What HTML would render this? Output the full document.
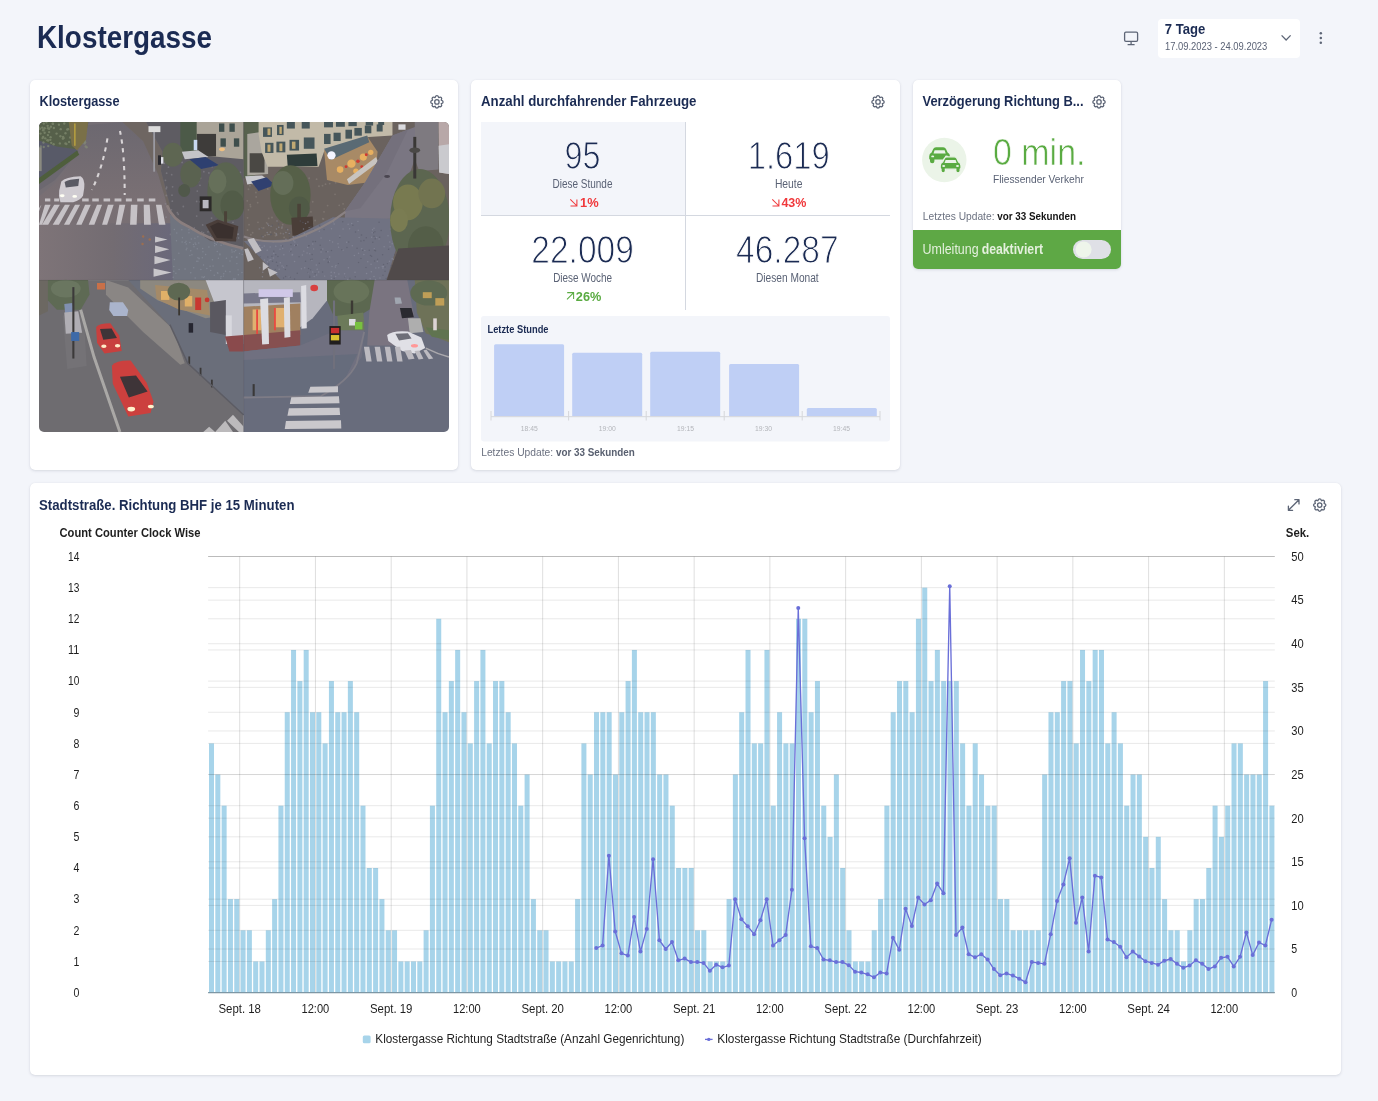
<!DOCTYPE html>
<html><head><meta charset="utf-8"><title>Klostergasse</title>
<style>
html,body{margin:0;padding:0;background:#f3f5fa;width:1378px;height:1101px;overflow:hidden;}
body{position:relative;font-family:"Liberation Sans",sans-serif;}
.card{position:absolute;background:#fff;border-radius:5px;box-shadow:0 1px 3px rgba(30,40,70,0.13),0 0 1px rgba(30,40,70,0.08);}
svg.ov{position:absolute;left:0;top:0;will-change:transform;}
svg text{font-family:"Liberation Sans",sans-serif;}
.light{stroke:#fff;stroke-width:0;}
</style></head><body>
<div style="position:absolute;left:1158px;top:19px;width:142px;height:39px;background:#fff;border-radius:4px"></div>
<div class="card" style="left:30px;top:80px;width:428px;height:390px"></div>
<div class="card" style="left:471px;top:80px;width:429px;height:390px"></div>
<div class="card" style="left:913px;top:80px;width:208px;height:189px"></div>
<div class="card" style="left:30px;top:483px;width:1311px;height:592px"></div>
<svg class="ov" width="1378" height="1101" viewBox="0 0 1378 1101">
<defs><clipPath id="pc"><rect x="39" y="122" width="410" height="310" rx="5"/></clipPath></defs>
<g clip-path="url(#pc)">
<g transform="translate(39,122) scale(0.29753)"><defs><linearGradient id="tlr" x1="0" y1="0" x2="1" y2="0"><stop offset="0" stop-color="#7e7478"/><stop offset="0.55" stop-color="#736c72"/><stop offset="1" stop-color="#6a687a"/></linearGradient><linearGradient id="tlu" x1="0" y1="0" x2="0" y2="1"><stop offset="0" stop-color="#6c6870"/><stop offset="0.5" stop-color="#7a7074"/><stop offset="1" stop-color="#736c72"/></linearGradient></defs>
<rect x="0" y="0" width="688" height="532" fill="#746e74"/>
<polygon points="164,10 280,0 350,65 400,175 440,310 450,532 0,532 0,250 54,205 126,109" fill="url(#tlu)"/>
<polygon points="0,340 450,340 450,532 0,532" fill="url(#tlr)"/>
<polygon points="0,0 170,0 164,10 126,109 54,195 0,230" fill="#6c6870"/>
<polygon points="0,60 60,80 125,92 132,100 0,190" fill="#585a68"/>
<polygon points="0,0 165,0 155,55 125,92 60,82 0,62" fill="#56604a"/>
<g fill="#8a9478" opacity="0.6"><circle cx="72" cy="48" r="4"/><circle cx="148" cy="40" r="4"/><circle cx="81" cy="50" r="4"/><circle cx="30" cy="44" r="4"/><circle cx="101" cy="67" r="4"/><circle cx="15" cy="26" r="4"/><circle cx="15" cy="69" r="4"/><circle cx="111" cy="4" r="4"/><circle cx="157" cy="82" r="4"/><circle cx="105" cy="52" r="4"/><circle cx="25" cy="1" r="4"/><circle cx="85" cy="5" r="4"/><circle cx="30" cy="21" r="4"/><circle cx="5" cy="39" r="4"/><circle cx="70" cy="72" r="4"/><circle cx="83" cy="54" r="4"/><circle cx="80" cy="56" r="4"/><circle cx="73" cy="24" r="4"/><circle cx="160" cy="85" r="4"/><circle cx="134" cy="60" r="4"/><circle cx="50" cy="20" r="4"/><circle cx="46" cy="6" r="4"/><circle cx="123" cy="34" r="4"/><circle cx="135" cy="33" r="4"/><circle cx="153" cy="72" r="4"/><circle cx="0" cy="18" r="4"/><circle cx="146" cy="40" r="4"/><circle cx="157" cy="34" r="4"/><circle cx="12" cy="54" r="4"/><circle cx="125" cy="23" r="4"/><circle cx="14" cy="28" r="4"/><circle cx="154" cy="64" r="4"/><circle cx="19" cy="21" r="4"/><circle cx="16" cy="5" r="4"/><circle cx="128" cy="15" r="4"/><circle cx="89" cy="38" r="4"/><circle cx="31" cy="62" r="4"/><circle cx="21" cy="55" r="4"/><circle cx="19" cy="36" r="4"/><circle cx="34" cy="23" r="4"/><circle cx="155" cy="68" r="4"/><circle cx="49" cy="75" r="4"/><circle cx="34" cy="34" r="4"/><circle cx="137" cy="55" r="4"/><circle cx="16" cy="84" r="4"/><circle cx="34" cy="22" r="4"/><circle cx="124" cy="28" r="4"/><circle cx="47" cy="6" r="4"/><circle cx="14" cy="50" r="4"/><circle cx="39" cy="51" r="4"/><circle cx="59" cy="39" r="4"/><circle cx="153" cy="41" r="4"/><circle cx="92" cy="74" r="4"/><circle cx="29" cy="13" r="4"/><circle cx="145" cy="70" r="4"/><circle cx="40" cy="16" r="4"/><circle cx="118" cy="80" r="4"/><circle cx="31" cy="81" r="4"/><circle cx="141" cy="51" r="4"/><circle cx="67" cy="9" r="4"/><circle cx="6" cy="82" r="4"/><circle cx="38" cy="60" r="4"/><circle cx="41" cy="70" r="4"/><circle cx="95" cy="25" r="4"/><circle cx="28" cy="61" r="4"/><circle cx="11" cy="19" r="4"/><circle cx="89" cy="72" r="4"/><circle cx="98" cy="24" r="4"/><circle cx="147" cy="17" r="4"/><circle cx="3" cy="23" r="4"/></g>
<polygon points="100,0 165,0 158,60 128,95 110,80" fill="#7a7048"/>
<rect x="118" y="5" width="5" height="75" fill="#b8a040"/>
<polygon points="0,188 128,96 135,110 0,208" fill="#4e5e3c"/>
<rect x="0" y="85" width="9" height="80" fill="#8a8a80"/>
<polygon points="280,0 360,0 415,100 410,165 440,280 440,310 400,175 350,65" fill="#6e6662"/>
<polygon points="360,0 688,0 688,420 575,400 500,350 440,310 440,280 410,165 415,100" fill="#5e5c62"/>
<g fill="#8a8890" opacity="0.55"><circle cx="669" cy="376" r="3"/><circle cx="435" cy="152" r="3"/><circle cx="637" cy="321" r="3"/><circle cx="594" cy="210" r="3"/><circle cx="578" cy="288" r="3"/><circle cx="571" cy="171" r="3"/><circle cx="532" cy="232" r="3"/><circle cx="608" cy="389" r="3"/><circle cx="667" cy="271" r="3"/><circle cx="536" cy="200" r="3"/><circle cx="429" cy="137" r="3"/><circle cx="541" cy="213" r="3"/><circle cx="519" cy="362" r="3"/><circle cx="557" cy="276" r="3"/><circle cx="481" cy="136" r="3"/><circle cx="505" cy="166" r="3"/><circle cx="553" cy="390" r="3"/><circle cx="595" cy="177" r="3"/><circle cx="652" cy="337" r="3"/><circle cx="611" cy="366" r="3"/><circle cx="618" cy="335" r="3"/><circle cx="512" cy="385" r="3"/><circle cx="670" cy="172" r="3"/><circle cx="616" cy="316" r="3"/><circle cx="540" cy="268" r="3"/><circle cx="547" cy="370" r="3"/><circle cx="550" cy="346" r="3"/><circle cx="512" cy="360" r="3"/><circle cx="654" cy="250" r="3"/><circle cx="568" cy="369" r="3"/><circle cx="608" cy="257" r="3"/><circle cx="478" cy="214" r="3"/><circle cx="602" cy="173" r="3"/><circle cx="656" cy="200" r="3"/><circle cx="657" cy="210" r="3"/><circle cx="669" cy="314" r="3"/><circle cx="551" cy="265" r="3"/><circle cx="589" cy="283" r="3"/><circle cx="501" cy="184" r="3"/><circle cx="553" cy="373" r="3"/><circle cx="582" cy="150" r="3"/><circle cx="633" cy="319" r="3"/><circle cx="656" cy="180" r="3"/><circle cx="614" cy="145" r="3"/><circle cx="590" cy="201" r="3"/><circle cx="479" cy="358" r="3"/><circle cx="448" cy="266" r="3"/><circle cx="642" cy="194" r="3"/><circle cx="475" cy="359" r="3"/><circle cx="530" cy="316" r="3"/><circle cx="428" cy="224" r="3"/><circle cx="465" cy="305" r="3"/><circle cx="442" cy="378" r="3"/><circle cx="427" cy="320" r="3"/><circle cx="425" cy="196" r="3"/><circle cx="631" cy="171" r="3"/><circle cx="468" cy="310" r="3"/><circle cx="520" cy="141" r="3"/><circle cx="677" cy="169" r="3"/><circle cx="429" cy="219" r="3"/><circle cx="580" cy="323" r="3"/><circle cx="449" cy="218" r="3"/><circle cx="428" cy="247" r="3"/><circle cx="619" cy="322" r="3"/><circle cx="655" cy="326" r="3"/><circle cx="644" cy="313" r="3"/><circle cx="543" cy="189" r="3"/><circle cx="592" cy="212" r="3"/><circle cx="447" cy="246" r="3"/><circle cx="647" cy="163" r="3"/><circle cx="572" cy="232" r="3"/><circle cx="554" cy="167" r="3"/><circle cx="670" cy="197" r="3"/><circle cx="578" cy="239" r="3"/><circle cx="425" cy="275" r="3"/><circle cx="457" cy="145" r="3"/><circle cx="429" cy="172" r="3"/><circle cx="445" cy="295" r="3"/><circle cx="552" cy="386" r="3"/><circle cx="663" cy="389" r="3"/><circle cx="480" cy="246" r="3"/><circle cx="485" cy="284" r="3"/><circle cx="582" cy="338" r="3"/><circle cx="604" cy="197" r="3"/><circle cx="530" cy="267" r="3"/><circle cx="421" cy="139" r="3"/><circle cx="526" cy="159" r="3"/><circle cx="608" cy="193" r="3"/><circle cx="446" cy="177" r="3"/><circle cx="480" cy="187" r="3"/></g>
<polygon points="440,310 500,350 575,400 688,420 688,532 450,532" fill="#70747f"/>
<g fill="#9096a4" opacity="0.5"><circle cx="507" cy="449" r="2.5"/><circle cx="538" cy="460" r="2.5"/><circle cx="599" cy="362" r="2.5"/><circle cx="453" cy="502" r="2.5"/><circle cx="512" cy="393" r="2.5"/><circle cx="687" cy="436" r="2.5"/><circle cx="649" cy="437" r="2.5"/><circle cx="602" cy="377" r="2.5"/><circle cx="601" cy="508" r="2.5"/><circle cx="575" cy="485" r="2.5"/><circle cx="610" cy="362" r="2.5"/><circle cx="630" cy="458" r="2.5"/><circle cx="522" cy="356" r="2.5"/><circle cx="656" cy="436" r="2.5"/><circle cx="621" cy="510" r="2.5"/><circle cx="620" cy="518" r="2.5"/><circle cx="544" cy="496" r="2.5"/><circle cx="556" cy="520" r="2.5"/><circle cx="659" cy="368" r="2.5"/><circle cx="482" cy="389" r="2.5"/><circle cx="680" cy="429" r="2.5"/><circle cx="599" cy="405" r="2.5"/><circle cx="571" cy="420" r="2.5"/><circle cx="534" cy="456" r="2.5"/><circle cx="589" cy="515" r="2.5"/><circle cx="612" cy="519" r="2.5"/><circle cx="654" cy="530" r="2.5"/><circle cx="610" cy="380" r="2.5"/><circle cx="655" cy="526" r="2.5"/><circle cx="665" cy="454" r="2.5"/><circle cx="620" cy="388" r="2.5"/><circle cx="648" cy="454" r="2.5"/><circle cx="518" cy="362" r="2.5"/><circle cx="653" cy="530" r="2.5"/><circle cx="471" cy="496" r="2.5"/><circle cx="548" cy="377" r="2.5"/><circle cx="520" cy="490" r="2.5"/><circle cx="658" cy="358" r="2.5"/><circle cx="596" cy="358" r="2.5"/><circle cx="621" cy="410" r="2.5"/><circle cx="660" cy="528" r="2.5"/><circle cx="570" cy="532" r="2.5"/><circle cx="524" cy="364" r="2.5"/><circle cx="593" cy="356" r="2.5"/><circle cx="497" cy="424" r="2.5"/><circle cx="595" cy="378" r="2.5"/><circle cx="460" cy="508" r="2.5"/><circle cx="525" cy="524" r="2.5"/><circle cx="663" cy="419" r="2.5"/><circle cx="560" cy="445" r="2.5"/><circle cx="603" cy="458" r="2.5"/><circle cx="583" cy="463" r="2.5"/><circle cx="674" cy="442" r="2.5"/><circle cx="553" cy="481" r="2.5"/><circle cx="507" cy="405" r="2.5"/><circle cx="683" cy="445" r="2.5"/><circle cx="581" cy="352" r="2.5"/><circle cx="549" cy="456" r="2.5"/><circle cx="455" cy="462" r="2.5"/><circle cx="600" cy="361" r="2.5"/><circle cx="599" cy="435" r="2.5"/><circle cx="612" cy="414" r="2.5"/><circle cx="618" cy="484" r="2.5"/><circle cx="455" cy="361" r="2.5"/><circle cx="611" cy="525" r="2.5"/><circle cx="510" cy="433" r="2.5"/><circle cx="591" cy="408" r="2.5"/><circle cx="537" cy="407" r="2.5"/><circle cx="538" cy="458" r="2.5"/><circle cx="521" cy="419" r="2.5"/><circle cx="634" cy="355" r="2.5"/><circle cx="585" cy="484" r="2.5"/><circle cx="524" cy="391" r="2.5"/><circle cx="641" cy="393" r="2.5"/><circle cx="495" cy="429" r="2.5"/><circle cx="616" cy="369" r="2.5"/><circle cx="527" cy="411" r="2.5"/><circle cx="648" cy="430" r="2.5"/><circle cx="654" cy="381" r="2.5"/><circle cx="530" cy="468" r="2.5"/><circle cx="661" cy="432" r="2.5"/><circle cx="504" cy="372" r="2.5"/><circle cx="576" cy="385" r="2.5"/><circle cx="642" cy="503" r="2.5"/><circle cx="494" cy="401" r="2.5"/><circle cx="642" cy="467" r="2.5"/><circle cx="642" cy="413" r="2.5"/><circle cx="481" cy="403" r="2.5"/><circle cx="639" cy="399" r="2.5"/><circle cx="532" cy="426" r="2.5"/><circle cx="550" cy="425" r="2.5"/><circle cx="669" cy="378" r="2.5"/><circle cx="451" cy="522" r="2.5"/><circle cx="659" cy="530" r="2.5"/><circle cx="553" cy="523" r="2.5"/><circle cx="671" cy="390" r="2.5"/><circle cx="627" cy="502" r="2.5"/><circle cx="608" cy="444" r="2.5"/><circle cx="519" cy="412" r="2.5"/><circle cx="504" cy="362" r="2.5"/><circle cx="590" cy="402" r="2.5"/><circle cx="643" cy="358" r="2.5"/><circle cx="665" cy="476" r="2.5"/><circle cx="670" cy="513" r="2.5"/><circle cx="664" cy="455" r="2.5"/><circle cx="453" cy="486" r="2.5"/><circle cx="491" cy="405" r="2.5"/><circle cx="608" cy="446" r="2.5"/><circle cx="548" cy="521" r="2.5"/><circle cx="596" cy="412" r="2.5"/><circle cx="510" cy="507" r="2.5"/><circle cx="564" cy="492" r="2.5"/><circle cx="534" cy="386" r="2.5"/><circle cx="577" cy="499" r="2.5"/><circle cx="491" cy="494" r="2.5"/><circle cx="669" cy="497" r="2.5"/><circle cx="646" cy="351" r="2.5"/><circle cx="600" cy="507" r="2.5"/><circle cx="462" cy="399" r="2.5"/><circle cx="514" cy="446" r="2.5"/><circle cx="551" cy="436" r="2.5"/><circle cx="635" cy="350" r="2.5"/><circle cx="463" cy="373" r="2.5"/><circle cx="480" cy="362" r="2.5"/><circle cx="682" cy="506" r="2.5"/><circle cx="470" cy="441" r="2.5"/><circle cx="525" cy="407" r="2.5"/><circle cx="534" cy="468" r="2.5"/><circle cx="590" cy="416" r="2.5"/><circle cx="495" cy="410" r="2.5"/></g>
<path d="M430 280 Q450 330 500 350 Q575 400 688 425" fill="none" stroke="#8a7e7e" stroke-width="9"/>
<polygon points="525,0 688,0 688,125 525,110" fill="#aaa498"/>
<g fill="#3e4e4c"><rect x="605" y="5" width="18" height="28"/><rect x="640" y="5" width="18" height="28"/><rect x="610" y="55" width="18" height="28"/><rect x="655" y="55" width="18" height="28"/></g>
<rect x="530" y="40" width="65" height="75" fill="#3e3c3a"/>
<polygon points="475,0 530,0 530,100 475,100" fill="#4c5a48"/>
<rect x="520" y="60" width="12" height="35" fill="#c8d8f0"/>
<ellipse cx="615" cy="92" rx="10" ry="6" fill="#f0c080"/>
<ellipse cx="450" cy="110" rx="35" ry="40" fill="#5e6652"/>
<ellipse cx="510" cy="175" rx="35" ry="45" fill="#5a6250"/>
<ellipse cx="488" cy="230" rx="20" ry="22" fill="#50584a"/>
<polygon points="480,100 535,95 570,118 490,125" fill="#c4c4c8"/>
<polygon points="505,125 560,118 605,145 545,158" fill="#2e4070"/>
<ellipse cx="628" cy="235" rx="62" ry="100" fill="#5a6450"/>
<ellipse cx="600" cy="200" rx="30" ry="40" fill="#66705a"/>
<ellipse cx="650" cy="280" rx="40" ry="50" fill="#525c48"/>
<rect x="622" y="300" width="10" height="60" fill="#4a4238"/>
<polygon points="560,345 600,328 670,350 662,402 592,400" fill="#4a3e3a"/>
<polygon points="575,350 602,338 655,355 650,392 598,390" fill="#3a302e"/>
<rect x="540" y="250" width="40" height="50" fill="#2c2a2a"/>
<rect x="550" y="262" width="20" height="28" fill="#b8b8c0"/>
<rect x="384" y="32" width="6" height="135" fill="#9a9aa2"/>
<rect x="368" y="14" width="40" height="20" fill="#dcdcdc"/>
<rect x="400" y="112" width="10" height="32" fill="#2a2a30"/>
<rect x="410" y="118" width="8" height="22" fill="#e0e0e8"/>
<path d="M75 200 Q88 184 140 182 Q155 190 152 222 L148 248 Q140 262 115 270 L72 270 Q64 250 68 230 Z" fill="#d0ccd2"/>
<path d="M86 202 Q100 193 135 191 L132 215 L90 220 Z" fill="#5a5a64"/>
<ellipse cx="78" cy="248" rx="8" ry="5" fill="#fffff4"/>
<ellipse cx="120" cy="250" rx="8" ry="5" fill="#fffff4"/>
<path d="M230 55 Q215 150 178 228" fill="none" stroke="#d8d4d6" stroke-width="7" stroke-dasharray="14 16"/>
<path d="M272 30 Q288 100 288 245" fill="none" stroke="#d8d4d6" stroke-width="7" stroke-dasharray="14 16"/>
<g fill="#c4c0c4"><rect x="20" y="257" width="18" height="10"/><rect x="51" y="257" width="17" height="10"/><rect x="145" y="257" width="22" height="10"/><rect x="179" y="257" width="22" height="10"/><rect x="217" y="257" width="22" height="10"/><rect x="254" y="257" width="23" height="10"/><rect x="292" y="257" width="20" height="10"/><rect x="330" y="257" width="22" height="10"/><rect x="369" y="257" width="22" height="10"/></g>
<g fill="#c6c2c6"><polygon points="20,278 39,278 10,345 0,345"/><polygon points="51,278 70,278 31,345 10,345"/><polygon points="87,278 104,278 67,345 46,345"/><polygon points="121,278 138,278 102,345 84,345"/><polygon points="155,278 174,278 143,345 125,345"/><polygon points="195,278 212,278 186,345 167,345"/><polygon points="232,278 251,278 229,345 212,345"/><polygon points="270,278 290,278 275,345 258,345"/><polygon points="309,278 331,278 328,345 306,345"/><polygon points="352,278 372,278 376,345 353,345"/><polygon points="393,278 412,278 425,345 403,345"/><polygon points="0,290 8,278 0,300"/></g>
<g fill="#c8c6ca"><polygon points="390,385 432,395 390,405"/><polygon points="390,415 438,428 390,440"/><polygon points="388,450 442,464 388,478"/><polygon points="385,492 446,506 385,520"/></g>
<g fill="#b07040" opacity="0.7"><circle cx="350" cy="385" r="4"/><circle cx="372" cy="395" r="4"/><circle cx="348" cy="410" r="4"/></g>
<rect x="688" y="0" width="690" height="532" fill="#6a625e"/>
<g fill="#8e8680" opacity="0.5"><circle cx="906" cy="336" r="3"/><circle cx="962" cy="378" r="3"/><circle cx="944" cy="374" r="3"/><circle cx="710" cy="278" r="3"/><circle cx="1011" cy="316" r="3"/><circle cx="997" cy="204" r="3"/><circle cx="855" cy="232" r="3"/><circle cx="879" cy="301" r="3"/><circle cx="704" cy="226" r="3"/><circle cx="792" cy="372" r="3"/><circle cx="953" cy="214" r="3"/><circle cx="963" cy="209" r="3"/><circle cx="904" cy="207" r="3"/><circle cx="701" cy="363" r="3"/><circle cx="769" cy="225" r="3"/><circle cx="1024" cy="363" r="3"/><circle cx="795" cy="382" r="3"/><circle cx="878" cy="322" r="3"/><circle cx="768" cy="378" r="3"/><circle cx="928" cy="383" r="3"/><circle cx="995" cy="243" r="3"/><circle cx="819" cy="215" r="3"/><circle cx="748" cy="194" r="3"/><circle cx="799" cy="307" r="3"/><circle cx="701" cy="322" r="3"/><circle cx="812" cy="245" r="3"/><circle cx="970" cy="281" r="3"/><circle cx="804" cy="281" r="3"/><circle cx="933" cy="192" r="3"/><circle cx="1022" cy="185" r="3"/><circle cx="947" cy="357" r="3"/><circle cx="706" cy="345" r="3"/><circle cx="821" cy="301" r="3"/><circle cx="703" cy="190" r="3"/><circle cx="760" cy="381" r="3"/><circle cx="765" cy="339" r="3"/><circle cx="1007" cy="378" r="3"/><circle cx="814" cy="255" r="3"/><circle cx="873" cy="343" r="3"/><circle cx="736" cy="337" r="3"/><circle cx="963" cy="361" r="3"/><circle cx="712" cy="379" r="3"/><circle cx="730" cy="252" r="3"/><circle cx="902" cy="373" r="3"/><circle cx="812" cy="374" r="3"/><circle cx="880" cy="246" r="3"/><circle cx="805" cy="217" r="3"/><circle cx="726" cy="211" r="3"/><circle cx="927" cy="389" r="3"/><circle cx="753" cy="190" r="3"/><circle cx="1026" cy="292" r="3"/><circle cx="834" cy="230" r="3"/><circle cx="896" cy="354" r="3"/><circle cx="850" cy="269" r="3"/><circle cx="718" cy="372" r="3"/><circle cx="711" cy="284" r="3"/><circle cx="977" cy="207" r="3"/><circle cx="941" cy="379" r="3"/><circle cx="908" cy="345" r="3"/><circle cx="735" cy="271" r="3"/><circle cx="749" cy="357" r="3"/><circle cx="797" cy="275" r="3"/><circle cx="1030" cy="359" r="3"/><circle cx="1022" cy="275" r="3"/><circle cx="861" cy="333" r="3"/><circle cx="858" cy="241" r="3"/><circle cx="833" cy="211" r="3"/><circle cx="824" cy="388" r="3"/><circle cx="1017" cy="312" r="3"/><circle cx="865" cy="251" r="3"/><circle cx="729" cy="237" r="3"/><circle cx="958" cy="362" r="3"/><circle cx="819" cy="345" r="3"/><circle cx="956" cy="326" r="3"/><circle cx="919" cy="340" r="3"/><circle cx="820" cy="328" r="3"/><circle cx="793" cy="282" r="3"/><circle cx="954" cy="325" r="3"/><circle cx="797" cy="379" r="3"/><circle cx="914" cy="302" r="3"/><circle cx="704" cy="295" r="3"/><circle cx="783" cy="321" r="3"/><circle cx="853" cy="352" r="3"/><circle cx="914" cy="348" r="3"/><circle cx="815" cy="315" r="3"/><circle cx="943" cy="354" r="3"/><circle cx="816" cy="357" r="3"/><circle cx="987" cy="325" r="3"/><circle cx="1022" cy="381" r="3"/><circle cx="871" cy="291" r="3"/><circle cx="755" cy="356" r="3"/><circle cx="1009" cy="280" r="3"/><circle cx="928" cy="331" r="3"/><circle cx="941" cy="216" r="3"/><circle cx="958" cy="302" r="3"/><circle cx="920" cy="268" r="3"/><circle cx="906" cy="343" r="3"/><circle cx="910" cy="331" r="3"/><circle cx="709" cy="214" r="3"/><circle cx="846" cy="317" r="3"/><circle cx="772" cy="324" r="3"/><circle cx="908" cy="189" r="3"/><circle cx="856" cy="228" r="3"/><circle cx="718" cy="208" r="3"/><circle cx="805" cy="218" r="3"/><circle cx="764" cy="187" r="3"/><circle cx="854" cy="260" r="3"/><circle cx="902" cy="304" r="3"/><circle cx="778" cy="370" r="3"/><circle cx="700" cy="265" r="3"/></g>
<polygon points="688,0 740,0 740,175 688,190" fill="#58624e"/>
<polygon points="700,40 770,30 770,175 700,180" fill="#aaa69e"/>
<rect x="708" y="105" width="50" height="65" fill="#4a4844"/>
<polygon points="738,0 1188,0 1188,45 1108,50 958,100 940,150 768,150 748,100 738,40" fill="#c2baa8"/>
<g fill="#46565a"><rect x="753" y="18" width="30" height="32"/><rect x="800" y="10" width="22" height="34"/><rect x="833" y="0" width="27" height="22"/><rect x="883" y="0" width="27" height="22"/><rect x="958" y="0" width="30" height="18"/><rect x="998" y="0" width="30" height="16"/><rect x="1040" y="0" width="28" height="14"/><rect x="1098" y="0" width="25" height="12"/><rect x="1140" y="0" width="20" height="10"/><rect x="760" y="70" width="28" height="34"/><rect x="798" y="66" width="30" height="36"/><rect x="842" y="60" width="32" height="36"/><rect x="890" y="52" width="36" height="38"/><rect x="958" y="40" width="22" height="34"/><rect x="990" y="36" width="24" height="28"/><rect x="1030" y="26" width="22" height="30"/><rect x="1060" y="20" width="25" height="26"/><rect x="1095" y="12" width="22" height="26"/><rect x="1135" y="8" width="20" height="24"/></g>
<g fill="#d8b878" opacity="0.85"><rect x="768" y="22" width="10" height="22"/><rect x="808" y="16" width="8" height="24"/><rect x="768" y="76" width="10" height="24"/><rect x="808" y="72" width="10" height="26"/><rect x="850" y="66" width="12" height="24"/></g>
<polygon points="833,110 933,106 936,148 836,150" fill="#2e3c3a"/>
<polygon points="958,95 1103,48 1138,100 1128,200 1038,212 968,195" fill="#a88a66"/>
<g fill="#e8b060"><circle cx="1050" cy="140" r="14"/><circle cx="1090" cy="118" r="12"/><circle cx="1012" cy="160" r="11"/><circle cx="1115" cy="102" r="9"/><circle cx="1065" cy="165" r="9"/></g>
<g fill="#d03a30"><circle cx="1072" cy="132" r="6"/><circle cx="1100" cy="110" r="5"/><circle cx="1032" cy="150" r="5"/><circle cx="1085" cy="150" r="5"/></g>
<polygon points="958,90 1103,45 1110,68 980,128" fill="#5a6a74"/>
<ellipse cx="983" cy="112" rx="14" ry="14" fill="#f4f4ff"/>
<polygon points="1035,192 1133,118 1140,135 1042,208" fill="#c8c4c0"/>
<polygon points="693,182 750,180 775,198 700,210" fill="#c8c8cc"/>
<polygon points="713,200 765,186 792,212 738,232" fill="#304070"/>
<ellipse cx="845" cy="245" rx="68" ry="100" fill="#566048"/>
<ellipse cx="820" cy="205" rx="35" ry="40" fill="#646e58"/>
<ellipse cx="875" cy="290" rx="35" ry="40" fill="#505a46"/>
<rect x="868" y="275" width="12" height="70" fill="#4a4238"/>
<polygon points="848,322 920,318 923,378 852,382" fill="#4a3e38"/>
<polygon points="1188,45 1308,0 1263,125 1193,325 1028,330 1028,300 1098,200" fill="#7a7682"/>
<polygon points="1188,45 1240,25 1170,170 1080,290 1028,300 1098,200" fill="#74707c"/>
<ellipse cx="1170" cy="183" rx="10" ry="5" fill="#4a4650"/>
<rect x="1208" y="8" width="24" height="18" fill="#dadade"/>
<rect x="1282" y="6" width="22" height="26" fill="#e4e4e8"/>
<polygon points="1263,0 1343,0 1343,160 1278,165 1263,125" fill="#7e7a80"/>
<polygon points="688,400 838,395 988,320 1193,325 1208,400 1168,532 813,532 738,450" fill="#707282"/>
<g fill="#8e90a0" opacity="0.6"><circle cx="889" cy="360" r="2.5"/><circle cx="1039" cy="344" r="2.5"/><circle cx="987" cy="403" r="2.5"/><circle cx="767" cy="431" r="2.5"/><circle cx="757" cy="417" r="2.5"/><circle cx="772" cy="348" r="2.5"/><circle cx="935" cy="495" r="2.5"/><circle cx="797" cy="375" r="2.5"/><circle cx="1029" cy="520" r="2.5"/><circle cx="1005" cy="409" r="2.5"/><circle cx="1189" cy="339" r="2.5"/><circle cx="1135" cy="388" r="2.5"/><circle cx="806" cy="354" r="2.5"/><circle cx="882" cy="493" r="2.5"/><circle cx="823" cy="446" r="2.5"/><circle cx="1034" cy="404" r="2.5"/><circle cx="992" cy="343" r="2.5"/><circle cx="767" cy="371" r="2.5"/><circle cx="1053" cy="416" r="2.5"/><circle cx="885" cy="447" r="2.5"/><circle cx="948" cy="390" r="2.5"/><circle cx="1105" cy="470" r="2.5"/><circle cx="852" cy="445" r="2.5"/><circle cx="982" cy="505" r="2.5"/><circle cx="1076" cy="388" r="2.5"/><circle cx="1191" cy="354" r="2.5"/><circle cx="932" cy="481" r="2.5"/><circle cx="810" cy="428" r="2.5"/><circle cx="758" cy="464" r="2.5"/><circle cx="1092" cy="445" r="2.5"/><circle cx="1143" cy="393" r="2.5"/><circle cx="1060" cy="449" r="2.5"/><circle cx="1007" cy="421" r="2.5"/><circle cx="1126" cy="519" r="2.5"/><circle cx="958" cy="463" r="2.5"/><circle cx="768" cy="470" r="2.5"/><circle cx="1038" cy="529" r="2.5"/><circle cx="1118" cy="387" r="2.5"/><circle cx="917" cy="464" r="2.5"/><circle cx="750" cy="422" r="2.5"/><circle cx="817" cy="353" r="2.5"/><circle cx="767" cy="484" r="2.5"/><circle cx="799" cy="380" r="2.5"/><circle cx="920" cy="504" r="2.5"/><circle cx="777" cy="420" r="2.5"/><circle cx="993" cy="507" r="2.5"/><circle cx="1117" cy="503" r="2.5"/><circle cx="868" cy="413" r="2.5"/><circle cx="905" cy="507" r="2.5"/><circle cx="1181" cy="360" r="2.5"/><circle cx="821" cy="376" r="2.5"/><circle cx="847" cy="427" r="2.5"/><circle cx="1011" cy="383" r="2.5"/><circle cx="742" cy="414" r="2.5"/><circle cx="910" cy="443" r="2.5"/><circle cx="1178" cy="468" r="2.5"/><circle cx="977" cy="454" r="2.5"/><circle cx="1051" cy="341" r="2.5"/><circle cx="1154" cy="486" r="2.5"/><circle cx="1142" cy="490" r="2.5"/><circle cx="920" cy="410" r="2.5"/><circle cx="788" cy="457" r="2.5"/><circle cx="769" cy="343" r="2.5"/><circle cx="836" cy="362" r="2.5"/><circle cx="896" cy="341" r="2.5"/><circle cx="740" cy="360" r="2.5"/><circle cx="787" cy="403" r="2.5"/><circle cx="752" cy="505" r="2.5"/><circle cx="1022" cy="360" r="2.5"/><circle cx="856" cy="399" r="2.5"/><circle cx="908" cy="355" r="2.5"/><circle cx="1131" cy="529" r="2.5"/><circle cx="954" cy="427" r="2.5"/><circle cx="780" cy="350" r="2.5"/><circle cx="898" cy="383" r="2.5"/><circle cx="1121" cy="362" r="2.5"/><circle cx="751" cy="520" r="2.5"/><circle cx="983" cy="359" r="2.5"/><circle cx="990" cy="335" r="2.5"/><circle cx="983" cy="526" r="2.5"/><circle cx="1137" cy="469" r="2.5"/><circle cx="860" cy="403" r="2.5"/><circle cx="817" cy="484" r="2.5"/><circle cx="985" cy="486" r="2.5"/><circle cx="892" cy="375" r="2.5"/><circle cx="1113" cy="527" r="2.5"/><circle cx="1132" cy="491" r="2.5"/><circle cx="1116" cy="478" r="2.5"/><circle cx="844" cy="434" r="2.5"/><circle cx="904" cy="336" r="2.5"/><circle cx="753" cy="386" r="2.5"/><circle cx="859" cy="469" r="2.5"/><circle cx="1180" cy="419" r="2.5"/><circle cx="1171" cy="528" r="2.5"/><circle cx="1179" cy="403" r="2.5"/><circle cx="841" cy="375" r="2.5"/><circle cx="830" cy="371" r="2.5"/><circle cx="1027" cy="510" r="2.5"/><circle cx="1127" cy="426" r="2.5"/><circle cx="1040" cy="490" r="2.5"/><circle cx="779" cy="462" r="2.5"/><circle cx="1158" cy="486" r="2.5"/><circle cx="1085" cy="426" r="2.5"/><circle cx="822" cy="488" r="2.5"/><circle cx="893" cy="490" r="2.5"/><circle cx="1187" cy="409" r="2.5"/><circle cx="925" cy="519" r="2.5"/><circle cx="1073" cy="364" r="2.5"/><circle cx="798" cy="360" r="2.5"/><circle cx="1156" cy="491" r="2.5"/><circle cx="807" cy="495" r="2.5"/><circle cx="1191" cy="461" r="2.5"/><circle cx="901" cy="440" r="2.5"/><circle cx="800" cy="333" r="2.5"/><circle cx="1187" cy="460" r="2.5"/><circle cx="982" cy="517" r="2.5"/><circle cx="940" cy="504" r="2.5"/><circle cx="1120" cy="372" r="2.5"/><circle cx="856" cy="389" r="2.5"/><circle cx="851" cy="447" r="2.5"/><circle cx="859" cy="414" r="2.5"/><circle cx="800" cy="512" r="2.5"/><circle cx="903" cy="422" r="2.5"/><circle cx="1008" cy="511" r="2.5"/><circle cx="933" cy="514" r="2.5"/><circle cx="971" cy="436" r="2.5"/><circle cx="981" cy="334" r="2.5"/><circle cx="942" cy="367" r="2.5"/><circle cx="742" cy="490" r="2.5"/><circle cx="819" cy="425" r="2.5"/><circle cx="1074" cy="441" r="2.5"/><circle cx="890" cy="434" r="2.5"/><circle cx="996" cy="487" r="2.5"/><circle cx="789" cy="442" r="2.5"/><circle cx="854" cy="385" r="2.5"/><circle cx="1095" cy="432" r="2.5"/><circle cx="998" cy="482" r="2.5"/><circle cx="1160" cy="419" r="2.5"/><circle cx="1022" cy="431" r="2.5"/><circle cx="976" cy="469" r="2.5"/><circle cx="948" cy="437" r="2.5"/><circle cx="960" cy="518" r="2.5"/><circle cx="1062" cy="505" r="2.5"/><circle cx="1173" cy="382" r="2.5"/><circle cx="997" cy="519" r="2.5"/><circle cx="1126" cy="357" r="2.5"/><circle cx="796" cy="418" r="2.5"/><circle cx="773" cy="378" r="2.5"/><circle cx="774" cy="464" r="2.5"/><circle cx="1101" cy="509" r="2.5"/><circle cx="811" cy="473" r="2.5"/><circle cx="1044" cy="359" r="2.5"/><circle cx="1146" cy="524" r="2.5"/><circle cx="841" cy="521" r="2.5"/><circle cx="923" cy="427" r="2.5"/><circle cx="1195" cy="496" r="2.5"/><circle cx="814" cy="416" r="2.5"/><circle cx="977" cy="398" r="2.5"/><circle cx="830" cy="394" r="2.5"/><circle cx="1072" cy="334" r="2.5"/></g>
<g fill="#585a68" opacity="0.6"><circle cx="844" cy="522" r="2.5"/><circle cx="798" cy="471" r="2.5"/><circle cx="779" cy="379" r="2.5"/><circle cx="1200" cy="372" r="2.5"/><circle cx="1035" cy="422" r="2.5"/><circle cx="948" cy="429" r="2.5"/><circle cx="828" cy="496" r="2.5"/><circle cx="781" cy="377" r="2.5"/><circle cx="749" cy="383" r="2.5"/><circle cx="928" cy="510" r="2.5"/><circle cx="914" cy="353" r="2.5"/><circle cx="859" cy="528" r="2.5"/><circle cx="769" cy="454" r="2.5"/><circle cx="914" cy="462" r="2.5"/><circle cx="896" cy="468" r="2.5"/><circle cx="969" cy="460" r="2.5"/><circle cx="1155" cy="446" r="2.5"/><circle cx="805" cy="343" r="2.5"/><circle cx="1175" cy="428" r="2.5"/><circle cx="829" cy="519" r="2.5"/><circle cx="1006" cy="476" r="2.5"/><circle cx="1145" cy="387" r="2.5"/><circle cx="904" cy="506" r="2.5"/><circle cx="802" cy="483" r="2.5"/><circle cx="785" cy="468" r="2.5"/><circle cx="1063" cy="520" r="2.5"/><circle cx="1128" cy="431" r="2.5"/><circle cx="831" cy="360" r="2.5"/><circle cx="983" cy="432" r="2.5"/><circle cx="773" cy="511" r="2.5"/><circle cx="973" cy="470" r="2.5"/><circle cx="841" cy="379" r="2.5"/><circle cx="745" cy="399" r="2.5"/><circle cx="863" cy="415" r="2.5"/><circle cx="913" cy="497" r="2.5"/><circle cx="1150" cy="365" r="2.5"/><circle cx="922" cy="363" r="2.5"/><circle cx="1045" cy="525" r="2.5"/><circle cx="833" cy="483" r="2.5"/><circle cx="878" cy="333" r="2.5"/><circle cx="1092" cy="398" r="2.5"/><circle cx="818" cy="417" r="2.5"/><circle cx="847" cy="412" r="2.5"/><circle cx="945" cy="414" r="2.5"/><circle cx="1011" cy="388" r="2.5"/><circle cx="784" cy="347" r="2.5"/><circle cx="789" cy="434" r="2.5"/><circle cx="906" cy="492" r="2.5"/><circle cx="972" cy="472" r="2.5"/><circle cx="1191" cy="343" r="2.5"/><circle cx="748" cy="358" r="2.5"/><circle cx="918" cy="445" r="2.5"/><circle cx="1082" cy="400" r="2.5"/><circle cx="1184" cy="331" r="2.5"/><circle cx="1124" cy="372" r="2.5"/><circle cx="1143" cy="337" r="2.5"/><circle cx="1184" cy="482" r="2.5"/><circle cx="1196" cy="446" r="2.5"/><circle cx="822" cy="524" r="2.5"/><circle cx="943" cy="347" r="2.5"/><circle cx="1018" cy="429" r="2.5"/><circle cx="958" cy="361" r="2.5"/><circle cx="796" cy="446" r="2.5"/><circle cx="948" cy="355" r="2.5"/><circle cx="942" cy="475" r="2.5"/><circle cx="1069" cy="424" r="2.5"/><circle cx="921" cy="402" r="2.5"/><circle cx="844" cy="370" r="2.5"/><circle cx="945" cy="352" r="2.5"/><circle cx="1074" cy="472" r="2.5"/><circle cx="1021" cy="335" r="2.5"/><circle cx="907" cy="416" r="2.5"/><circle cx="783" cy="524" r="2.5"/><circle cx="1088" cy="431" r="2.5"/><circle cx="1064" cy="370" r="2.5"/><circle cx="846" cy="435" r="2.5"/><circle cx="1082" cy="459" r="2.5"/><circle cx="743" cy="453" r="2.5"/><circle cx="1158" cy="479" r="2.5"/><circle cx="1167" cy="526" r="2.5"/><circle cx="843" cy="389" r="2.5"/><circle cx="992" cy="525" r="2.5"/><circle cx="910" cy="518" r="2.5"/><circle cx="1131" cy="433" r="2.5"/><circle cx="1028" cy="521" r="2.5"/><circle cx="1100" cy="389" r="2.5"/><circle cx="1129" cy="369" r="2.5"/><circle cx="910" cy="522" r="2.5"/><circle cx="1130" cy="392" r="2.5"/><circle cx="874" cy="453" r="2.5"/><circle cx="1128" cy="467" r="2.5"/><circle cx="1171" cy="476" r="2.5"/><circle cx="1118" cy="451" r="2.5"/><circle cx="907" cy="416" r="2.5"/><circle cx="965" cy="436" r="2.5"/><circle cx="1126" cy="384" r="2.5"/><circle cx="772" cy="477" r="2.5"/><circle cx="865" cy="414" r="2.5"/><circle cx="794" cy="496" r="2.5"/><circle cx="866" cy="388" r="2.5"/><circle cx="1110" cy="431" r="2.5"/><circle cx="868" cy="508" r="2.5"/><circle cx="929" cy="402" r="2.5"/><circle cx="1184" cy="488" r="2.5"/><circle cx="1084" cy="380" r="2.5"/><circle cx="1114" cy="449" r="2.5"/><circle cx="1122" cy="404" r="2.5"/><circle cx="1099" cy="489" r="2.5"/><circle cx="918" cy="461" r="2.5"/><circle cx="1099" cy="529" r="2.5"/><circle cx="1163" cy="487" r="2.5"/><circle cx="803" cy="452" r="2.5"/><circle cx="1055" cy="347" r="2.5"/><circle cx="953" cy="504" r="2.5"/><circle cx="1156" cy="515" r="2.5"/><circle cx="783" cy="451" r="2.5"/><circle cx="1138" cy="461" r="2.5"/><circle cx="887" cy="338" r="2.5"/><circle cx="1163" cy="502" r="2.5"/><circle cx="1041" cy="403" r="2.5"/></g>
<path d="M688 385 Q760 410 840 398 Q950 365 1030 302" fill="none" stroke="#8a8284" stroke-width="7"/>
<ellipse cx="1280" cy="330" rx="100" ry="172" fill="#5c6650"/>
<ellipse cx="1240" cy="270" rx="50" ry="60" fill="#787a50"/>
<ellipse cx="1320" cy="240" rx="45" ry="50" fill="#727450"/>
<ellipse cx="1300" cy="420" rx="60" ry="70" fill="#545e48"/>
<ellipse cx="1210" cy="330" rx="30" ry="40" fill="#7a7c52"/>
<rect x="1298" y="420" width="12" height="80" fill="#4a4030"/>
<polygon points="1208,425 1378,415 1378,532 1168,532" fill="#504a4a"/>
<polygon points="1343,0 1378,0 1378,175 1345,170" fill="#b8a8a8"/>
<polygon points="1343,80 1378,75 1378,175 1345,170" fill="#cacace"/>
<rect x="1258" y="50" width="10" height="140" fill="#3a3836"/>
<ellipse cx="1263" cy="95" rx="18" ry="9" fill="#4a4846"/>
<g fill="#c0bec2"><polygon points="700,395 722,390 748,432 728,442"/><polygon points="690,428 702,424 722,462 702,470"/><polygon points="752,470 772,486 752,500"/><polygon points="768,490 802,506 776,520"/></g>
<rect x="0" y="532" width="688" height="510" fill="#6e6c70"/>
<polygon points="0,531 30,531 30,636 0,650" fill="#6c6862"/>
<polygon points="30,531 165,531 170,580 140,631 60,631 30,600" fill="#5e6a54"/>
<ellipse cx="90" cy="560" rx="50" ry="30" fill="#6a7660"/>
<polygon points="80,650 150,640 160,820 95,830" fill="#747276"/>
<path d="M85 612 L112 608 L118 640 L88 645 Z" fill="#8090b0"/>
<path d="M85 640 L132 636 L145 708 L90 712 Z" fill="#b0aeb4"/>
<rect x="112" y="555" width="7" height="240" fill="#3c3a3a"/>
<rect x="108" y="706" width="27" height="30" fill="#3e6aa8"/>
<path d="M140 631 L185 790 L272 1042" fill="none" stroke="#aaa8a6" stroke-width="10"/>
<polygon points="225,531 300,556 450,696 490,811 475,816 350,706 225,581" fill="#8a8684"/>
<polygon points="300,531 688,531 688,985 500,811 450,696" fill="#6a6e7a"/>
<polygon points="340,531 688,531 688,640 560,660 400,600 340,560" fill="#8c8880"/>
<polygon points="390,548 565,565 575,650 470,630 395,595" fill="#a48a68"/>
<g fill="#e0b068"><rect x="410" y="568" width="28" height="30"/><rect x="490" y="585" width="25" height="35"/></g>
<g fill="#c83830"><rect x="525" y="590" width="20" height="42"/><circle cx="618" cy="590" r="11"/><circle cx="565" cy="598" r="8"/></g>
<polygon points="560,531 688,531 688,746 640,746 625,700" fill="#c6c6ce"/>
<polygon points="575,606 628,598 628,716 575,706" fill="#5a5860"/>
<rect x="628" y="650" width="20" height="96" fill="#d8d8de"/>
<ellipse cx="470" cy="570" rx="38" ry="30" fill="#5e6852"/>
<rect x="468" y="590" width="6" height="60" fill="#3a3630"/>
<polygon points="625,721 688,716 688,771 640,771" fill="#8a4a4c"/>
<rect x="503" y="676" width="15" height="32" fill="#262630"/>
<g fill="#3a3838"><rect x="502" y="788" width="6" height="26"/><rect x="540" y="826" width="6" height="26"/><rect x="578" y="866" width="6" height="26"/></g>
<path d="M440 681 L500 811 L688 985" fill="none" stroke="#5c5c64" stroke-width="5"/>
<path d="M195 541 L222 541 L222 563 L195 563 Z" fill="#c87048"/>
<path d="M238 606 L282 606 L300 632 L296 652 L250 652 L236 632 Z" fill="#aab4cc"/>
<path d="M192 690 Q200 676 240 676 L270 718 L278 770 L220 778 L195 742 Z" fill="#c8403e"/>
<path d="M205 696 L244 694 L262 726 L216 732 Z" fill="#3e3438"/>
<ellipse cx="218" cy="754" rx="9" ry="6" fill="#ffecc8"/>
<ellipse cx="264" cy="752" rx="9" ry="6" fill="#ffecc8"/>
<path d="M245 818 Q262 800 308 802 L362 876 L385 940 L375 978 L300 990 L248 880 Z" fill="#cc403e"/>
<path d="M272 856 L326 852 L365 906 L302 926 Z" fill="#3e3438"/>
<ellipse cx="310" cy="965" rx="13" ry="8" fill="#fff2cc"/>
<ellipse cx="376" cy="956" rx="10" ry="6" fill="#fff2cc"/>
<g fill="#bcbabc"><polygon points="552,1042 572,1024 592,1042"/><polygon points="592,1042 626,1004 652,1042"/><polygon points="632,1004 652,984 688,1024 688,1042 672,1042"/></g>
<rect x="688" y="531" width="690" height="511" fill="#686c7c"/>
<polygon points="688,531 968,531 968,600 920,660 878,690 688,721" fill="#b6b6be"/>
<polygon points="688,576 878,572 880,606 688,610" fill="#78788a"/>
<polygon points="688,621 878,610 878,716 688,730" fill="#a08060"/>
<g fill="#e0b070"><rect x="718" y="630" width="30" height="70"/><rect x="790" y="625" width="45" height="65"/></g>
<g fill="#e84840"><rect x="730" y="630" width="6" height="85"/><rect x="790" y="625" width="6" height="75"/></g>
<polygon points="688,716 878,700 878,751 688,771" fill="#865050"/>
<g fill="#dcdce2"><polygon points="743,596 770,592 773,746 750,748"/><polygon points="823,591 843,588 845,723 825,725"/><polygon points="881,551 898,548 900,693 882,695"/></g>
<rect x="738" y="562" width="115" height="26" fill="#d0c8e8"/>
<ellipse cx="925" cy="558" rx="13" ry="11" fill="#d84040"/>
<polygon points="688,771 878,751 1000,700 1093,700 1085,790 1030,860 948,921 688,926" fill="#707080"/>
<polygon points="688,800 1070,780 1030,860 948,921 688,926" fill="#666c7c"/>
<path d="M688 926 L948 921 Q1040 870 1068 811 L1093 706" fill="none" stroke="#7e7c86" stroke-width="6"/>
<polygon points="968,531 1140,531 1128,620 1060,661 990,650 968,600" fill="#5c6850"/>
<ellipse cx="1050" cy="570" rx="60" ry="40" fill="#68745a"/>
<rect x="1048" y="600" width="8" height="60" fill="#3c3a34"/>
<polygon points="1003,651 1090,640 1094,700 1006,700" fill="#6c7a5a"/>
<rect x="988" y="600" width="7" height="230" fill="#70707c"/>
<rect x="976" y="686" width="38" height="62" fill="#201e1e"/>
<rect x="981" y="716" width="28" height="18" fill="#d8c030"/>
<rect x="981" y="692" width="28" height="18" fill="#c83030"/>
<rect x="1042" y="662" width="22" height="22" fill="#dcdce0"/>
<rect x="1062" y="672" width="25" height="25" fill="#78c040"/>
<polygon points="1128,531 1238,531 1260,650 1240,751 1103,751 1110,640" fill="#7a7480"/>
<polygon points="1263,531 1378,531 1378,740 1300,710 1270,640" fill="#6e7258"/>
<ellipse cx="1310" cy="575" rx="62" ry="42" fill="#5e6a52"/>
<g fill="#d0a858" opacity="0.85"><rect x="1290" y="572" width="30" height="20"/><rect x="1332" y="592" width="30" height="25"/></g>
<polygon points="1300,690 1378,700 1378,732 1320,722" fill="#607450"/>
<path d="M1195 590 L1215 590 L1220 610 L1198 612 Z" fill="#a0a6b0"/>
<path d="M1213 625 L1252 625 L1260 656 L1220 660 Z" fill="#2a2a30"/>
<path d="M1240 660 L1282 660 L1292 706 L1246 710 Z" fill="#aeaeae"/>
<rect x="1325" y="660" width="12" height="40" fill="#dcd4d4"/>
<path d="M1170 716 Q1188 700 1240 704 L1285 724 L1298 760 L1262 778 L1220 770 L1174 736 Z" fill="#e0e0e6"/>
<path d="M1198 712 L1240 710 L1252 728 L1210 734 Z" fill="#6e6e78"/>
<ellipse cx="1262" cy="752" rx="12" ry="6" fill="#ff9898"/>
<g fill="#bcbac0"><polygon points="1092,755 1110,755 1118,805 1100,805"/><polygon points="1128,755 1146,755 1154,805 1136,805"/><polygon points="1162,755 1180,755 1188,805 1170,805"/><polygon points="1196,755 1214,755 1222,805 1204,805"/><polygon points="1228,768 1250,766 1262,796 1242,798"/><polygon points="1262,770 1278,768 1292,796 1276,798"/><polygon points="1292,768 1302,765 1325,795 1310,797"/></g>
<path d="M1300 760 Q1340 780 1378 790" fill="none" stroke="#aaa8ac" stroke-width="5"/>
<g fill="#cac8cc"><polygon points="912,890 1005,888 1005,908 905,910"/><polygon points="848,925 1008,922 1010,945 843,948"/><polygon points="840,962 1010,960 1012,985 835,987"/><polygon points="830,1005 1015,1002 1016,1030 826,1032"/></g>
<rect x="718" y="881" width="7" height="40" fill="#3a3838"/>
<path d="M688 0V1042M0 532H1378" stroke="#3a3a40" stroke-width="2" opacity="0.3"/></g>
</g>
<text x="37.0" y="48.0" font-size="31.10" font-weight="700" fill="#1b2b53" text-anchor="start" textLength="175.0" lengthAdjust="spacingAndGlyphs">Klostergasse</text>
<g fill="none" stroke="#5d6576" stroke-width="1.3"><rect x="1124.6" y="32.1" width="13" height="9.2" rx="1.3"/><path d="M1131.1 41.3v2.8M1127.6 44.6h7"/></g>
<text x="1164.8" y="34.0" font-size="14.24" font-weight="700" fill="#1b2b53" text-anchor="start" textLength="40.5" lengthAdjust="spacingAndGlyphs">7 Tage</text>
<text x="1165.0" y="49.8" font-size="11.05" font-weight="400" fill="#5a6275" text-anchor="start" textLength="102.3" lengthAdjust="spacingAndGlyphs">17.09.2023 - 24.09.2023</text>
<path d="M1281.6 35.4l4.5 4.6 4.5-4.6" fill="none" stroke="#5d6576" stroke-width="1.3"/>
<g fill="#5d6576"><circle cx="1320.8" cy="33.2" r="1.25"/><circle cx="1320.8" cy="38" r="1.25"/><circle cx="1320.8" cy="42.8" r="1.25"/></g>
<text x="39.5" y="105.8" font-size="14.53" font-weight="700" fill="#1b2b53" text-anchor="start" textLength="80.0" lengthAdjust="spacingAndGlyphs">Klostergasse</text>
<g fill="none" stroke="#5d6576" stroke-width="1.3" stroke-linejoin="round"><path d="M435.10 97.56C435.82 95.08 437.98 95.08 438.70 97.56C440.96 96.32 442.48 97.84 441.24 100.10C443.72 100.82 443.72 102.98 441.24 103.70C442.48 105.96 440.96 107.48 438.70 106.24C437.98 108.72 435.82 108.72 435.10 106.24C432.84 107.48 431.32 105.96 432.56 103.70C430.08 102.98 430.08 100.82 432.56 100.10C431.32 97.84 432.84 96.32 435.10 97.56Z"/><circle cx="436.9" cy="101.9" r="2.2"/></g>
<text x="481.0" y="105.8" font-size="14.53" font-weight="700" fill="#1b2b53" text-anchor="start" textLength="215.5" lengthAdjust="spacingAndGlyphs">Anzahl durchfahrender Fahrzeuge</text>
<g fill="none" stroke="#5d6576" stroke-width="1.3" stroke-linejoin="round"><path d="M876.20 97.56C876.92 95.08 879.08 95.08 879.80 97.56C882.06 96.32 883.58 97.84 882.34 100.10C884.82 100.82 884.82 102.98 882.34 103.70C883.58 105.96 882.06 107.48 879.80 106.24C879.08 108.72 876.92 108.72 876.20 106.24C873.94 107.48 872.42 105.96 873.66 103.70C871.18 102.98 871.18 100.82 873.66 100.10C872.42 97.84 873.94 96.32 876.20 97.56Z"/><circle cx="878.0" cy="101.9" r="2.2"/></g>
<rect x="481" y="122" width="204.5" height="93" fill="#f3f5fa"/>
<path d="M685.5 122V310M481 215.5H890" stroke="#d4d8e0" stroke-width="1" fill="none"/>
<text x="582.5" y="169.0" font-size="39.53" font-weight="400" fill="#1b2b53" text-anchor="middle" textLength="36.0" lengthAdjust="spacingAndGlyphs" stroke="#f3f5fa" stroke-width="1.1">95</text>
<text x="582.5" y="188.1" font-size="12.21" font-weight="400" fill="#5a6275" text-anchor="middle" textLength="60.0" lengthAdjust="spacingAndGlyphs">Diese Stunde</text>
<text x="788.7" y="169.0" font-size="39.53" font-weight="400" fill="#1b2b53" text-anchor="middle" textLength="82.0" lengthAdjust="spacingAndGlyphs" stroke="#fff" stroke-width="1.1">1.619</text>
<text x="788.7" y="188.1" font-size="12.21" font-weight="400" fill="#5a6275" text-anchor="middle" textLength="27.6" lengthAdjust="spacingAndGlyphs">Heute</text>
<text x="582.6" y="263.2" font-size="39.53" font-weight="400" fill="#1b2b53" text-anchor="middle" textLength="102.5" lengthAdjust="spacingAndGlyphs" stroke="#fff" stroke-width="1.1">22.009</text>
<text x="582.6" y="282.3" font-size="12.21" font-weight="400" fill="#5a6275" text-anchor="middle" textLength="58.8" lengthAdjust="spacingAndGlyphs">Diese Woche</text>
<text x="787.3" y="263.2" font-size="39.53" font-weight="400" fill="#1b2b53" text-anchor="middle" textLength="102.5" lengthAdjust="spacingAndGlyphs" stroke="#fff" stroke-width="1.1">46.287</text>
<text x="787.3" y="282.3" font-size="12.21" font-weight="400" fill="#5a6275" text-anchor="middle" textLength="62.8" lengthAdjust="spacingAndGlyphs">Diesen Monat</text>
<path d="M570.3 199.3l6.2 6.2M576.9 199.6v6.4h-6.4" fill="none" stroke="#f0393c" stroke-width="1.05"/>
<text x="580.0" y="207.0" font-size="13.08" font-weight="700" fill="#f0393c" text-anchor="start" textLength="18.6" lengthAdjust="spacingAndGlyphs">1%</text>
<path d="M772.3 199.3l6.2 6.2M778.9 199.6v6.4h-6.4" fill="none" stroke="#f0393c" stroke-width="1.05"/>
<text x="781.4" y="207.0" font-size="13.08" font-weight="700" fill="#f0393c" text-anchor="start" textLength="25.0" lengthAdjust="spacingAndGlyphs">43%</text>
<path d="M567.0 299.3l6.2 -6.2M567.2 292.6h6.4v6.4" fill="none" stroke="#5aab42" stroke-width="1.05"/>
<text x="575.8" y="301.1" font-size="13.08" font-weight="700" fill="#5aab42" text-anchor="start" textLength="25.5" lengthAdjust="spacingAndGlyphs">26%</text>
<rect x="481" y="316" width="409" height="125.5" rx="3" fill="#f3f5fa"/>
<text x="487.5" y="333.1" font-size="10.32" font-weight="700" fill="#1b2b53" text-anchor="start" textLength="61.0" lengthAdjust="spacingAndGlyphs">Letzte Stunde</text>
<path d="M494.1 416.2V345.7q0-1.5 1.5-1.5h67q1.5 0 1.5 1.5V416.2Z" fill="#bfcff5"/>
<path d="M572.2 416.2V354.3q0-1.5 1.5-1.5h67q1.5 0 1.5 1.5V416.2Z" fill="#bfcff5"/>
<path d="M650.2 416.2V353.3q0-1.5 1.5-1.5h67q1.5 0 1.5 1.5V416.2Z" fill="#bfcff5"/>
<path d="M729.1 416.2V365.4q0-1.5 1.5-1.5h67q1.5 0 1.5 1.5V416.2Z" fill="#bfcff5"/>
<path d="M806.8 416.2V409.5q0-1.5 1.5-1.5h67q1.5 0 1.5 1.5V416.2Z" fill="#bfcff5"/>
<path d="M491 416.7H880" stroke="#d6d7da" stroke-width="1"/>
<path d="M491 411V420.5" stroke="#d6d7da" stroke-width="1"/>
<path d="M568.6 411V420.5" stroke="#d6d7da" stroke-width="1"/>
<path d="M646.2 411V420.5" stroke="#d6d7da" stroke-width="1"/>
<path d="M724.2 411V420.5" stroke="#d6d7da" stroke-width="1"/>
<path d="M802.2 411V420.5" stroke="#d6d7da" stroke-width="1"/>
<path d="M880 411V420.5" stroke="#d6d7da" stroke-width="1"/>
<text x="529.2" y="430.9" font-size="7.12" font-weight="400" fill="#b3b5ba" text-anchor="middle" textLength="17.0" lengthAdjust="spacingAndGlyphs">18:45</text>
<text x="607.3" y="430.9" font-size="7.12" font-weight="400" fill="#b3b5ba" text-anchor="middle" textLength="17.0" lengthAdjust="spacingAndGlyphs">19:00</text>
<text x="685.6" y="430.9" font-size="7.12" font-weight="400" fill="#b3b5ba" text-anchor="middle" textLength="17.0" lengthAdjust="spacingAndGlyphs">19:15</text>
<text x="763.6" y="430.9" font-size="7.12" font-weight="400" fill="#b3b5ba" text-anchor="middle" textLength="17.0" lengthAdjust="spacingAndGlyphs">19:30</text>
<text x="841.6" y="430.9" font-size="7.12" font-weight="400" fill="#b3b5ba" text-anchor="middle" textLength="17.0" lengthAdjust="spacingAndGlyphs">19:45</text>
<text x="481.2" y="455.8" font-size="10.90" font-weight="400" fill="#6c7281" text-anchor="start" textLength="72.0" lengthAdjust="spacingAndGlyphs">Letztes Update:</text>
<text x="556.0" y="455.8" font-size="10.90" font-weight="700" fill="#596070" text-anchor="start" textLength="78.8" lengthAdjust="spacingAndGlyphs">vor 33 Sekunden</text>
<text x="922.5" y="105.8" font-size="14.53" font-weight="700" fill="#1b2b53" text-anchor="start" textLength="161.0" lengthAdjust="spacingAndGlyphs">Verzögerung Richtung B...</text>
<g fill="none" stroke="#5d6576" stroke-width="1.3" stroke-linejoin="round"><path d="M1097.20 97.56C1097.92 95.08 1100.08 95.08 1100.80 97.56C1103.06 96.32 1104.58 97.84 1103.34 100.10C1105.82 100.82 1105.82 102.98 1103.34 103.70C1104.58 105.96 1103.06 107.48 1100.80 106.24C1100.08 108.72 1097.92 108.72 1097.20 106.24C1094.94 107.48 1093.42 105.96 1094.66 103.70C1092.18 102.98 1092.18 100.82 1094.66 100.10C1093.42 97.84 1094.94 96.32 1097.20 97.56Z"/><circle cx="1099.0" cy="101.9" r="2.2"/></g>
<circle cx="944.3" cy="160" r="22.2" fill="#ebf4e8"/>
<g transform="translate(929.0,147.2)"><path d="M2.6 5.2L4.2 1.8Q5 0 7 0H14.2Q16.2 0 17 1.8L18.6 5.2Q21 6.3 21 9V11.2Q21 12 20.2 12.3V14Q20.2 16 18 16Q15.8 16 15.8 14V12.4H5.4V14Q5.4 16 3.2 16Q1 16 1 14V12.3Q0.2 12 0.2 11.2V9Q0.2 6.3 2.6 5.2Z" fill="#5aab42"/><path d="M5.6 3.1H15.6L16.7 6.3H4.5Z" fill="#ebf4e8"/><ellipse cx="3.7" cy="9.2" rx="1.5" ry="0.9" fill="#ebf4e8"/><ellipse cx="17.5" cy="9.2" rx="1.5" ry="0.9" fill="#ebf4e8"/></g>
<g transform="translate(940.0,156.8)"><path d="M2.6 5.2L4.2 1.8Q5 0 7 0H14.2Q16.2 0 17 1.8L18.6 5.2Q21 6.3 21 9V11.2Q21 12 20.2 12.3V14Q20.2 16 18 16Q15.8 16 15.8 14V12.4H5.4V14Q5.4 16 3.2 16Q1 16 1 14V12.3Q0.2 12 0.2 11.2V9Q0.2 6.3 2.6 5.2Z" fill="#5aab42" stroke="#ebf4e8" stroke-width="1.3"/><path d="M5.6 3.1H15.6L16.7 6.3H4.5Z" fill="#ebf4e8"/><ellipse cx="3.7" cy="9.2" rx="1.5" ry="0.9" fill="#ebf4e8"/><ellipse cx="17.5" cy="9.2" rx="1.5" ry="0.9" fill="#ebf4e8"/></g>
<text x="993.0" y="165.0" font-size="36.34" font-weight="400" fill="#5aab42" text-anchor="start" textLength="92.5" lengthAdjust="spacingAndGlyphs" stroke="#fff" stroke-width="0.7">0 min.</text>
<text x="993.0" y="182.8" font-size="11.63" font-weight="400" fill="#5a6275" text-anchor="start" textLength="90.8" lengthAdjust="spacingAndGlyphs">Fliessender Verkehr</text>
<text x="922.8" y="220.1" font-size="11.34" font-weight="400" fill="#6c7281" text-anchor="start" textLength="71.7" lengthAdjust="spacingAndGlyphs">Letztes Update:</text>
<text x="997.2" y="220.1" font-size="11.34" font-weight="700" fill="#141414" text-anchor="start" textLength="78.8" lengthAdjust="spacingAndGlyphs">vor 33 Sekunden</text>
<path d="M913 230H1121V264a5 5 0 0 1-5 5H918a5 5 0 0 1-5-5Z" fill="#5ea845"/>
<text x="922.6" y="254.3" font-size="14.24" font-weight="400" fill="#e4f0dd" text-anchor="start" textLength="56.0" lengthAdjust="spacingAndGlyphs">Umleitung</text>
<text x="981.7" y="254.3" font-size="14.24" font-weight="700" fill="#e4f0dd" text-anchor="start" textLength="61.3" lengthAdjust="spacingAndGlyphs">deaktiviert</text>
<rect x="1073" y="240" width="38" height="19" rx="9.5" fill="#dfe0e6"/><circle cx="1083.6" cy="249.5" r="8" fill="#eef5ea"/>
<text x="39.0" y="509.9" font-size="14.10" font-weight="700" fill="#1b2b53" text-anchor="start" textLength="255.5" lengthAdjust="spacingAndGlyphs">Stadtstraße. Richtung BHF je 15 Minuten</text>
<g fill="none" stroke="#5d6576" stroke-width="1.3" stroke-linecap="round"><path d="M1288.4 510.3l10.6-10.6M1288.4 510.3v-4.2M1288.4 510.3h4.2M1299 499.7v4.2M1299 499.7h-4.2"/></g>
<g fill="none" stroke="#5d6576" stroke-width="1.3" stroke-linejoin="round"><path d="M1317.90 500.76C1318.62 498.28 1320.78 498.28 1321.50 500.76C1323.76 499.52 1325.28 501.04 1324.04 503.30C1326.52 504.02 1326.52 506.18 1324.04 506.90C1325.28 509.16 1323.76 510.68 1321.50 509.44C1320.78 511.92 1318.62 511.92 1317.90 509.44C1315.64 510.68 1314.12 509.16 1315.36 506.90C1312.88 506.18 1312.88 504.02 1315.36 503.30C1314.12 501.04 1315.64 499.52 1317.90 500.76Z"/><circle cx="1319.7" cy="505.1" r="2.2"/></g>
<text x="59.5" y="536.7" font-size="12.35" font-weight="600" fill="#1e1e1e" text-anchor="start" textLength="141.0" lengthAdjust="spacingAndGlyphs">Count Counter Clock Wise</text>
<text x="1285.8" y="536.8" font-size="12.35" font-weight="600" fill="#1e1e1e" text-anchor="start" textLength="23.5" lengthAdjust="spacingAndGlyphs">Sek.</text>
<g fill="#a7d4ea"><rect x="209.00" y="743.40" width="5.01" height="249.20"/><rect x="215.31" y="774.55" width="5.01" height="218.05"/><rect x="221.62" y="805.70" width="5.01" height="186.90"/><rect x="227.94" y="899.15" width="5.01" height="93.45"/><rect x="234.25" y="899.15" width="5.01" height="93.45"/><rect x="240.56" y="930.30" width="5.01" height="62.30"/><rect x="246.87" y="930.30" width="5.01" height="62.30"/><rect x="253.18" y="961.45" width="5.01" height="31.15"/><rect x="259.49" y="961.45" width="5.01" height="31.15"/><rect x="265.81" y="930.30" width="5.01" height="62.30"/><rect x="272.12" y="899.15" width="5.01" height="93.45"/><rect x="278.43" y="805.70" width="5.01" height="186.90"/><rect x="284.74" y="712.25" width="5.01" height="280.35"/><rect x="291.05" y="649.95" width="5.01" height="342.65"/><rect x="297.37" y="681.10" width="5.01" height="311.50"/><rect x="303.68" y="649.95" width="5.01" height="342.65"/><rect x="309.99" y="712.25" width="5.01" height="280.35"/><rect x="316.30" y="712.25" width="5.01" height="280.35"/><rect x="322.61" y="743.40" width="5.01" height="249.20"/><rect x="328.92" y="681.10" width="5.01" height="311.50"/><rect x="335.24" y="712.25" width="5.01" height="280.35"/><rect x="341.55" y="712.25" width="5.01" height="280.35"/><rect x="347.86" y="681.10" width="5.01" height="311.50"/><rect x="354.17" y="712.25" width="5.01" height="280.35"/><rect x="360.48" y="805.70" width="5.01" height="186.90"/><rect x="366.80" y="868.00" width="5.01" height="124.60"/><rect x="373.11" y="868.00" width="5.01" height="124.60"/><rect x="379.42" y="899.15" width="5.01" height="93.45"/><rect x="385.73" y="930.30" width="5.01" height="62.30"/><rect x="392.04" y="930.30" width="5.01" height="62.30"/><rect x="398.36" y="961.45" width="5.01" height="31.15"/><rect x="404.67" y="961.45" width="5.01" height="31.15"/><rect x="410.98" y="961.45" width="5.01" height="31.15"/><rect x="417.29" y="961.45" width="5.01" height="31.15"/><rect x="423.60" y="930.30" width="5.01" height="62.30"/><rect x="429.91" y="805.70" width="5.01" height="186.90"/><rect x="436.23" y="618.80" width="5.01" height="373.80"/><rect x="442.54" y="712.25" width="5.01" height="280.35"/><rect x="448.85" y="681.10" width="5.01" height="311.50"/><rect x="455.16" y="649.95" width="5.01" height="342.65"/><rect x="461.47" y="712.25" width="5.01" height="280.35"/><rect x="467.79" y="743.40" width="5.01" height="249.20"/><rect x="474.10" y="681.10" width="5.01" height="311.50"/><rect x="480.41" y="649.95" width="5.01" height="342.65"/><rect x="486.72" y="743.40" width="5.01" height="249.20"/><rect x="493.03" y="681.10" width="5.01" height="311.50"/><rect x="499.34" y="681.10" width="5.01" height="311.50"/><rect x="505.66" y="712.25" width="5.01" height="280.35"/><rect x="511.97" y="743.40" width="5.01" height="249.20"/><rect x="518.28" y="805.70" width="5.01" height="186.90"/><rect x="524.59" y="774.55" width="5.01" height="218.05"/><rect x="530.90" y="899.15" width="5.01" height="93.45"/><rect x="537.22" y="930.30" width="5.01" height="62.30"/><rect x="543.53" y="930.30" width="5.01" height="62.30"/><rect x="549.84" y="961.45" width="5.01" height="31.15"/><rect x="556.15" y="961.45" width="5.01" height="31.15"/><rect x="562.46" y="961.45" width="5.01" height="31.15"/><rect x="568.77" y="961.45" width="5.01" height="31.15"/><rect x="575.09" y="899.15" width="5.01" height="93.45"/><rect x="581.40" y="743.40" width="5.01" height="249.20"/><rect x="587.71" y="774.55" width="5.01" height="218.05"/><rect x="594.02" y="712.25" width="5.01" height="280.35"/><rect x="600.33" y="712.25" width="5.01" height="280.35"/><rect x="606.65" y="712.25" width="5.01" height="280.35"/><rect x="612.96" y="774.55" width="5.01" height="218.05"/><rect x="619.27" y="712.25" width="5.01" height="280.35"/><rect x="625.58" y="681.10" width="5.01" height="311.50"/><rect x="631.89" y="649.95" width="5.01" height="342.65"/><rect x="638.20" y="712.25" width="5.01" height="280.35"/><rect x="644.52" y="712.25" width="5.01" height="280.35"/><rect x="650.83" y="712.25" width="5.01" height="280.35"/><rect x="657.14" y="774.55" width="5.01" height="218.05"/><rect x="663.45" y="774.55" width="5.01" height="218.05"/><rect x="669.76" y="805.70" width="5.01" height="186.90"/><rect x="676.08" y="868.00" width="5.01" height="124.60"/><rect x="682.39" y="868.00" width="5.01" height="124.60"/><rect x="688.70" y="868.00" width="5.01" height="124.60"/><rect x="695.01" y="930.30" width="5.01" height="62.30"/><rect x="701.32" y="930.30" width="5.01" height="62.30"/><rect x="707.63" y="961.45" width="5.01" height="31.15"/><rect x="713.95" y="961.45" width="5.01" height="31.15"/><rect x="720.26" y="961.45" width="5.01" height="31.15"/><rect x="726.57" y="899.15" width="5.01" height="93.45"/><rect x="732.88" y="774.55" width="5.01" height="218.05"/><rect x="739.19" y="712.25" width="5.01" height="280.35"/><rect x="745.51" y="649.95" width="5.01" height="342.65"/><rect x="751.82" y="743.40" width="5.01" height="249.20"/><rect x="758.13" y="743.40" width="5.01" height="249.20"/><rect x="764.44" y="649.95" width="5.01" height="342.65"/><rect x="770.75" y="805.70" width="5.01" height="186.90"/><rect x="777.07" y="712.25" width="5.01" height="280.35"/><rect x="783.38" y="743.40" width="5.01" height="249.20"/><rect x="789.69" y="743.40" width="5.01" height="249.20"/><rect x="796.00" y="618.80" width="5.01" height="373.80"/><rect x="802.31" y="618.80" width="5.01" height="373.80"/><rect x="808.62" y="712.25" width="5.01" height="280.35"/><rect x="814.94" y="681.10" width="5.01" height="311.50"/><rect x="821.25" y="805.70" width="5.01" height="186.90"/><rect x="827.56" y="836.85" width="5.01" height="155.75"/><rect x="833.87" y="774.55" width="5.01" height="218.05"/><rect x="840.18" y="868.00" width="5.01" height="124.60"/><rect x="846.50" y="930.30" width="5.01" height="62.30"/><rect x="852.81" y="961.45" width="5.01" height="31.15"/><rect x="859.12" y="961.45" width="5.01" height="31.15"/><rect x="865.43" y="961.45" width="5.01" height="31.15"/><rect x="871.74" y="930.30" width="5.01" height="62.30"/><rect x="878.05" y="899.15" width="5.01" height="93.45"/><rect x="884.37" y="805.70" width="5.01" height="186.90"/><rect x="890.68" y="712.25" width="5.01" height="280.35"/><rect x="896.99" y="681.10" width="5.01" height="311.50"/><rect x="903.30" y="681.10" width="5.01" height="311.50"/><rect x="909.61" y="712.25" width="5.01" height="280.35"/><rect x="915.93" y="618.80" width="5.01" height="373.80"/><rect x="922.24" y="587.65" width="5.01" height="404.95"/><rect x="928.55" y="681.10" width="5.01" height="311.50"/><rect x="934.86" y="649.95" width="5.01" height="342.65"/><rect x="941.17" y="681.10" width="5.01" height="311.50"/><rect x="947.48" y="681.10" width="5.01" height="311.50"/><rect x="953.80" y="681.10" width="5.01" height="311.50"/><rect x="960.11" y="743.40" width="5.01" height="249.20"/><rect x="966.42" y="805.70" width="5.01" height="186.90"/><rect x="972.73" y="743.40" width="5.01" height="249.20"/><rect x="979.04" y="774.55" width="5.01" height="218.05"/><rect x="985.36" y="805.70" width="5.01" height="186.90"/><rect x="991.67" y="805.70" width="5.01" height="186.90"/><rect x="997.98" y="899.15" width="5.01" height="93.45"/><rect x="1004.29" y="899.15" width="5.01" height="93.45"/><rect x="1010.60" y="930.30" width="5.01" height="62.30"/><rect x="1016.91" y="930.30" width="5.01" height="62.30"/><rect x="1023.23" y="930.30" width="5.01" height="62.30"/><rect x="1029.54" y="930.30" width="5.01" height="62.30"/><rect x="1035.85" y="930.30" width="5.01" height="62.30"/><rect x="1042.16" y="774.55" width="5.01" height="218.05"/><rect x="1048.47" y="712.25" width="5.01" height="280.35"/><rect x="1054.79" y="712.25" width="5.01" height="280.35"/><rect x="1061.10" y="681.10" width="5.01" height="311.50"/><rect x="1067.41" y="681.10" width="5.01" height="311.50"/><rect x="1073.72" y="743.40" width="5.01" height="249.20"/><rect x="1080.03" y="649.95" width="5.01" height="342.65"/><rect x="1086.34" y="681.10" width="5.01" height="311.50"/><rect x="1092.66" y="649.95" width="5.01" height="342.65"/><rect x="1098.97" y="649.95" width="5.01" height="342.65"/><rect x="1105.28" y="743.40" width="5.01" height="249.20"/><rect x="1111.59" y="712.25" width="5.01" height="280.35"/><rect x="1117.90" y="743.40" width="5.01" height="249.20"/><rect x="1124.22" y="805.70" width="5.01" height="186.90"/><rect x="1130.53" y="774.55" width="5.01" height="218.05"/><rect x="1136.84" y="774.55" width="5.01" height="218.05"/><rect x="1143.15" y="836.85" width="5.01" height="155.75"/><rect x="1149.46" y="868.00" width="5.01" height="124.60"/><rect x="1155.78" y="836.85" width="5.01" height="155.75"/><rect x="1162.09" y="899.15" width="5.01" height="93.45"/><rect x="1168.40" y="930.30" width="5.01" height="62.30"/><rect x="1174.71" y="930.30" width="5.01" height="62.30"/><rect x="1181.02" y="961.45" width="5.01" height="31.15"/><rect x="1187.33" y="930.30" width="5.01" height="62.30"/><rect x="1193.65" y="899.15" width="5.01" height="93.45"/><rect x="1199.96" y="899.15" width="5.01" height="93.45"/><rect x="1206.27" y="868.00" width="5.01" height="124.60"/><rect x="1212.58" y="805.70" width="5.01" height="186.90"/><rect x="1218.89" y="836.85" width="5.01" height="155.75"/><rect x="1225.21" y="805.70" width="5.01" height="186.90"/><rect x="1231.52" y="743.40" width="5.01" height="249.20"/><rect x="1237.83" y="743.40" width="5.01" height="249.20"/><rect x="1244.14" y="774.55" width="5.01" height="218.05"/><rect x="1250.45" y="774.55" width="5.01" height="218.05"/><rect x="1256.76" y="774.55" width="5.01" height="218.05"/><rect x="1263.08" y="681.10" width="5.01" height="311.50"/><rect x="1269.39" y="805.70" width="5.01" height="186.90"/></g>
<path d="M208.1 992.60H1274.8M208.1 961.45H1274.8M208.1 930.30H1274.8M208.1 899.15H1274.8M208.1 868.00H1274.8M208.1 836.85H1274.8M208.1 805.70H1274.8M208.1 774.55H1274.8M208.1 743.40H1274.8M208.1 712.25H1274.8M208.1 681.10H1274.8M208.1 649.95H1274.8M208.1 618.80H1274.8M208.1 587.65H1274.8M208.1 556.50H1274.8M208.1 992.60H1274.8M208.1 948.99H1274.8M208.1 905.38H1274.8M208.1 861.77H1274.8M208.1 818.16H1274.8M208.1 774.55H1274.8M208.1 730.94H1274.8M208.1 687.33H1274.8M208.1 643.72H1274.8M208.1 600.11H1274.8M208.1 556.50H1274.8" stroke="#000" stroke-opacity="0.09" stroke-width="1" fill="none"/>
<path d="M239.70 556.5V992.6M315.44 556.5V992.6M391.18 556.5V992.6M466.93 556.5V992.6M542.67 556.5V992.6M618.41 556.5V992.6M694.15 556.5V992.6M769.89 556.5V992.6M845.64 556.5V992.6M921.38 556.5V992.6M997.12 556.5V992.6M1072.86 556.5V992.6M1148.60 556.5V992.6M1224.35 556.5V992.6" stroke="#000" stroke-opacity="0.13" stroke-width="1" fill="none"/>
<path d="M208.1 556.5H1274.8" stroke="#000" stroke-opacity="0.12" stroke-width="1"/>
<path d="M208.1 992.6H1274.8" stroke="#7d97a5" stroke-width="1.2"/>
<path d="M596.28 948.12 L602.59 945.50 L608.90 855.66 L615.21 931.55 L621.53 953.35 L627.84 955.53 L634.15 917.07 L640.46 951.61 L646.77 928.93 L653.08 859.15 L659.40 940.27 L665.71 948.99 L672.02 942.01 L678.33 960.33 L684.64 958.58 L690.96 962.07 L697.27 962.07 L703.58 962.95 L709.89 970.80 L716.20 964.69 L722.51 967.31 L728.83 965.56 L735.14 899.27 L741.45 919.34 L747.76 926.31 L754.07 934.16 L760.39 920.21 L766.70 899.27 L773.01 945.50 L779.32 940.27 L785.63 935.03 L791.94 889.68 L798.26 607.96 L804.57 838.22 L810.88 946.37 L817.19 948.12 L823.50 959.46 L829.82 960.33 L836.13 962.07 L842.44 962.07 L848.75 965.13 L855.06 971.67 L861.37 972.54 L867.69 974.28 L874.00 977.34 L880.31 972.54 L886.62 973.41 L892.93 937.65 L899.25 949.86 L905.56 908.87 L911.87 925.88 L918.18 897.53 L924.49 904.51 L930.81 900.15 L937.12 883.58 L943.43 893.17 L949.74 586.15 L956.05 935.03 L962.36 927.62 L968.68 954.22 L974.99 957.28 L981.30 954.22 L987.61 959.46 L993.92 969.05 L1000.24 975.16 L1006.55 973.41 L1012.86 975.59 L1019.17 978.64 L1025.48 982.13 L1031.79 962.07 L1038.11 962.95 L1044.42 963.82 L1050.73 934.16 L1057.04 901.02 L1063.35 884.45 L1069.67 858.28 L1075.98 922.82 L1082.29 897.53 L1088.60 951.61 L1094.91 875.73 L1101.22 877.47 L1107.54 939.40 L1113.85 942.01 L1120.16 946.81 L1126.47 957.28 L1132.78 951.61 L1139.10 956.40 L1145.41 961.20 L1151.72 962.95 L1158.03 964.69 L1164.34 960.76 L1170.65 959.02 L1176.97 963.82 L1183.28 967.74 L1189.59 965.56 L1195.90 960.33 L1202.21 963.82 L1208.53 969.05 L1214.84 966.43 L1221.15 957.71 L1227.46 956.84 L1233.77 966.43 L1240.08 956.84 L1246.40 932.42 L1252.71 955.10 L1259.02 942.45 L1265.33 945.50 L1271.64 919.77" fill="none" stroke="#6a6fd8" stroke-width="1.35" stroke-linejoin="round"/>
<g fill="#6a6fd8"><circle cx="596.28" cy="948.12" r="2.0"/><circle cx="602.59" cy="945.50" r="2.0"/><circle cx="608.90" cy="855.66" r="2.0"/><circle cx="615.21" cy="931.55" r="2.0"/><circle cx="621.53" cy="953.35" r="2.0"/><circle cx="627.84" cy="955.53" r="2.0"/><circle cx="634.15" cy="917.07" r="2.0"/><circle cx="640.46" cy="951.61" r="2.0"/><circle cx="646.77" cy="928.93" r="2.0"/><circle cx="653.08" cy="859.15" r="2.0"/><circle cx="659.40" cy="940.27" r="2.0"/><circle cx="665.71" cy="948.99" r="2.0"/><circle cx="672.02" cy="942.01" r="2.0"/><circle cx="678.33" cy="960.33" r="2.0"/><circle cx="684.64" cy="958.58" r="2.0"/><circle cx="690.96" cy="962.07" r="2.0"/><circle cx="697.27" cy="962.07" r="2.0"/><circle cx="703.58" cy="962.95" r="2.0"/><circle cx="709.89" cy="970.80" r="2.0"/><circle cx="716.20" cy="964.69" r="2.0"/><circle cx="722.51" cy="967.31" r="2.0"/><circle cx="728.83" cy="965.56" r="2.0"/><circle cx="735.14" cy="899.27" r="2.0"/><circle cx="741.45" cy="919.34" r="2.0"/><circle cx="747.76" cy="926.31" r="2.0"/><circle cx="754.07" cy="934.16" r="2.0"/><circle cx="760.39" cy="920.21" r="2.0"/><circle cx="766.70" cy="899.27" r="2.0"/><circle cx="773.01" cy="945.50" r="2.0"/><circle cx="779.32" cy="940.27" r="2.0"/><circle cx="785.63" cy="935.03" r="2.0"/><circle cx="791.94" cy="889.68" r="2.0"/><circle cx="798.26" cy="607.96" r="2.0"/><circle cx="804.57" cy="838.22" r="2.0"/><circle cx="810.88" cy="946.37" r="2.0"/><circle cx="817.19" cy="948.12" r="2.0"/><circle cx="823.50" cy="959.46" r="2.0"/><circle cx="829.82" cy="960.33" r="2.0"/><circle cx="836.13" cy="962.07" r="2.0"/><circle cx="842.44" cy="962.07" r="2.0"/><circle cx="848.75" cy="965.13" r="2.0"/><circle cx="855.06" cy="971.67" r="2.0"/><circle cx="861.37" cy="972.54" r="2.0"/><circle cx="867.69" cy="974.28" r="2.0"/><circle cx="874.00" cy="977.34" r="2.0"/><circle cx="880.31" cy="972.54" r="2.0"/><circle cx="886.62" cy="973.41" r="2.0"/><circle cx="892.93" cy="937.65" r="2.0"/><circle cx="899.25" cy="949.86" r="2.0"/><circle cx="905.56" cy="908.87" r="2.0"/><circle cx="911.87" cy="925.88" r="2.0"/><circle cx="918.18" cy="897.53" r="2.0"/><circle cx="924.49" cy="904.51" r="2.0"/><circle cx="930.81" cy="900.15" r="2.0"/><circle cx="937.12" cy="883.58" r="2.0"/><circle cx="943.43" cy="893.17" r="2.0"/><circle cx="949.74" cy="586.15" r="2.0"/><circle cx="956.05" cy="935.03" r="2.0"/><circle cx="962.36" cy="927.62" r="2.0"/><circle cx="968.68" cy="954.22" r="2.0"/><circle cx="974.99" cy="957.28" r="2.0"/><circle cx="981.30" cy="954.22" r="2.0"/><circle cx="987.61" cy="959.46" r="2.0"/><circle cx="993.92" cy="969.05" r="2.0"/><circle cx="1000.24" cy="975.16" r="2.0"/><circle cx="1006.55" cy="973.41" r="2.0"/><circle cx="1012.86" cy="975.59" r="2.0"/><circle cx="1019.17" cy="978.64" r="2.0"/><circle cx="1025.48" cy="982.13" r="2.0"/><circle cx="1031.79" cy="962.07" r="2.0"/><circle cx="1038.11" cy="962.95" r="2.0"/><circle cx="1044.42" cy="963.82" r="2.0"/><circle cx="1050.73" cy="934.16" r="2.0"/><circle cx="1057.04" cy="901.02" r="2.0"/><circle cx="1063.35" cy="884.45" r="2.0"/><circle cx="1069.67" cy="858.28" r="2.0"/><circle cx="1075.98" cy="922.82" r="2.0"/><circle cx="1082.29" cy="897.53" r="2.0"/><circle cx="1088.60" cy="951.61" r="2.0"/><circle cx="1094.91" cy="875.73" r="2.0"/><circle cx="1101.22" cy="877.47" r="2.0"/><circle cx="1107.54" cy="939.40" r="2.0"/><circle cx="1113.85" cy="942.01" r="2.0"/><circle cx="1120.16" cy="946.81" r="2.0"/><circle cx="1126.47" cy="957.28" r="2.0"/><circle cx="1132.78" cy="951.61" r="2.0"/><circle cx="1139.10" cy="956.40" r="2.0"/><circle cx="1145.41" cy="961.20" r="2.0"/><circle cx="1151.72" cy="962.95" r="2.0"/><circle cx="1158.03" cy="964.69" r="2.0"/><circle cx="1164.34" cy="960.76" r="2.0"/><circle cx="1170.65" cy="959.02" r="2.0"/><circle cx="1176.97" cy="963.82" r="2.0"/><circle cx="1183.28" cy="967.74" r="2.0"/><circle cx="1189.59" cy="965.56" r="2.0"/><circle cx="1195.90" cy="960.33" r="2.0"/><circle cx="1202.21" cy="963.82" r="2.0"/><circle cx="1208.53" cy="969.05" r="2.0"/><circle cx="1214.84" cy="966.43" r="2.0"/><circle cx="1221.15" cy="957.71" r="2.0"/><circle cx="1227.46" cy="956.84" r="2.0"/><circle cx="1233.77" cy="966.43" r="2.0"/><circle cx="1240.08" cy="956.84" r="2.0"/><circle cx="1246.40" cy="932.42" r="2.0"/><circle cx="1252.71" cy="955.10" r="2.0"/><circle cx="1259.02" cy="942.45" r="2.0"/><circle cx="1265.33" cy="945.50" r="2.0"/><circle cx="1271.64" cy="919.77" r="2.0"/></g>
<text x="79.3" y="996.9" font-size="12.65" font-weight="400" fill="#1e1e1e" text-anchor="end" textLength="5.9" lengthAdjust="spacingAndGlyphs">0</text>
<text x="79.3" y="965.8" font-size="12.65" font-weight="400" fill="#1e1e1e" text-anchor="end" textLength="5.9" lengthAdjust="spacingAndGlyphs">1</text>
<text x="79.3" y="934.6" font-size="12.65" font-weight="400" fill="#1e1e1e" text-anchor="end" textLength="5.9" lengthAdjust="spacingAndGlyphs">2</text>
<text x="79.3" y="903.4" font-size="12.65" font-weight="400" fill="#1e1e1e" text-anchor="end" textLength="5.9" lengthAdjust="spacingAndGlyphs">3</text>
<text x="79.3" y="872.3" font-size="12.65" font-weight="400" fill="#1e1e1e" text-anchor="end" textLength="5.9" lengthAdjust="spacingAndGlyphs">4</text>
<text x="79.3" y="841.1" font-size="12.65" font-weight="400" fill="#1e1e1e" text-anchor="end" textLength="5.9" lengthAdjust="spacingAndGlyphs">5</text>
<text x="79.3" y="810.0" font-size="12.65" font-weight="400" fill="#1e1e1e" text-anchor="end" textLength="5.9" lengthAdjust="spacingAndGlyphs">6</text>
<text x="79.3" y="778.8" font-size="12.65" font-weight="400" fill="#1e1e1e" text-anchor="end" textLength="5.9" lengthAdjust="spacingAndGlyphs">7</text>
<text x="79.3" y="747.7" font-size="12.65" font-weight="400" fill="#1e1e1e" text-anchor="end" textLength="5.9" lengthAdjust="spacingAndGlyphs">8</text>
<text x="79.3" y="716.5" font-size="12.65" font-weight="400" fill="#1e1e1e" text-anchor="end" textLength="5.9" lengthAdjust="spacingAndGlyphs">9</text>
<text x="79.3" y="685.4" font-size="12.65" font-weight="400" fill="#1e1e1e" text-anchor="end" textLength="11.3" lengthAdjust="spacingAndGlyphs">10</text>
<text x="79.3" y="654.2" font-size="12.65" font-weight="400" fill="#1e1e1e" text-anchor="end" textLength="11.3" lengthAdjust="spacingAndGlyphs">11</text>
<text x="79.3" y="623.1" font-size="12.65" font-weight="400" fill="#1e1e1e" text-anchor="end" textLength="11.3" lengthAdjust="spacingAndGlyphs">12</text>
<text x="79.3" y="592.0" font-size="12.65" font-weight="400" fill="#1e1e1e" text-anchor="end" textLength="11.3" lengthAdjust="spacingAndGlyphs">13</text>
<text x="79.3" y="560.8" font-size="12.65" font-weight="400" fill="#1e1e1e" text-anchor="end" textLength="11.3" lengthAdjust="spacingAndGlyphs">14</text>
<text x="1291.2" y="996.9" font-size="12.65" font-weight="400" fill="#1e1e1e" text-anchor="start" textLength="5.9" lengthAdjust="spacingAndGlyphs">0</text>
<text x="1291.2" y="953.3" font-size="12.65" font-weight="400" fill="#1e1e1e" text-anchor="start" textLength="5.9" lengthAdjust="spacingAndGlyphs">5</text>
<text x="1291.2" y="909.7" font-size="12.65" font-weight="400" fill="#1e1e1e" text-anchor="start" textLength="12.4" lengthAdjust="spacingAndGlyphs">10</text>
<text x="1291.2" y="866.1" font-size="12.65" font-weight="400" fill="#1e1e1e" text-anchor="start" textLength="12.4" lengthAdjust="spacingAndGlyphs">15</text>
<text x="1291.2" y="822.5" font-size="12.65" font-weight="400" fill="#1e1e1e" text-anchor="start" textLength="12.4" lengthAdjust="spacingAndGlyphs">20</text>
<text x="1291.2" y="778.8" font-size="12.65" font-weight="400" fill="#1e1e1e" text-anchor="start" textLength="12.4" lengthAdjust="spacingAndGlyphs">25</text>
<text x="1291.2" y="735.2" font-size="12.65" font-weight="400" fill="#1e1e1e" text-anchor="start" textLength="12.4" lengthAdjust="spacingAndGlyphs">30</text>
<text x="1291.2" y="691.6" font-size="12.65" font-weight="400" fill="#1e1e1e" text-anchor="start" textLength="12.4" lengthAdjust="spacingAndGlyphs">35</text>
<text x="1291.2" y="648.0" font-size="12.65" font-weight="400" fill="#1e1e1e" text-anchor="start" textLength="12.4" lengthAdjust="spacingAndGlyphs">40</text>
<text x="1291.2" y="604.4" font-size="12.65" font-weight="400" fill="#1e1e1e" text-anchor="start" textLength="12.4" lengthAdjust="spacingAndGlyphs">45</text>
<text x="1291.2" y="560.8" font-size="12.65" font-weight="400" fill="#1e1e1e" text-anchor="start" textLength="12.4" lengthAdjust="spacingAndGlyphs">50</text>
<text x="239.7" y="1013.0" font-size="12.50" font-weight="400" fill="#1e1e1e" text-anchor="middle" textLength="42.5" lengthAdjust="spacingAndGlyphs">Sept. 18</text>
<text x="315.4" y="1013.0" font-size="12.50" font-weight="400" fill="#1e1e1e" text-anchor="middle" textLength="27.8" lengthAdjust="spacingAndGlyphs">12:00</text>
<text x="391.2" y="1013.0" font-size="12.50" font-weight="400" fill="#1e1e1e" text-anchor="middle" textLength="42.5" lengthAdjust="spacingAndGlyphs">Sept. 19</text>
<text x="466.9" y="1013.0" font-size="12.50" font-weight="400" fill="#1e1e1e" text-anchor="middle" textLength="27.8" lengthAdjust="spacingAndGlyphs">12:00</text>
<text x="542.7" y="1013.0" font-size="12.50" font-weight="400" fill="#1e1e1e" text-anchor="middle" textLength="42.5" lengthAdjust="spacingAndGlyphs">Sept. 20</text>
<text x="618.4" y="1013.0" font-size="12.50" font-weight="400" fill="#1e1e1e" text-anchor="middle" textLength="27.8" lengthAdjust="spacingAndGlyphs">12:00</text>
<text x="694.2" y="1013.0" font-size="12.50" font-weight="400" fill="#1e1e1e" text-anchor="middle" textLength="42.5" lengthAdjust="spacingAndGlyphs">Sept. 21</text>
<text x="769.9" y="1013.0" font-size="12.50" font-weight="400" fill="#1e1e1e" text-anchor="middle" textLength="27.8" lengthAdjust="spacingAndGlyphs">12:00</text>
<text x="845.6" y="1013.0" font-size="12.50" font-weight="400" fill="#1e1e1e" text-anchor="middle" textLength="42.5" lengthAdjust="spacingAndGlyphs">Sept. 22</text>
<text x="921.4" y="1013.0" font-size="12.50" font-weight="400" fill="#1e1e1e" text-anchor="middle" textLength="27.8" lengthAdjust="spacingAndGlyphs">12:00</text>
<text x="997.1" y="1013.0" font-size="12.50" font-weight="400" fill="#1e1e1e" text-anchor="middle" textLength="42.5" lengthAdjust="spacingAndGlyphs">Sept. 23</text>
<text x="1072.9" y="1013.0" font-size="12.50" font-weight="400" fill="#1e1e1e" text-anchor="middle" textLength="27.8" lengthAdjust="spacingAndGlyphs">12:00</text>
<text x="1148.6" y="1013.0" font-size="12.50" font-weight="400" fill="#1e1e1e" text-anchor="middle" textLength="42.5" lengthAdjust="spacingAndGlyphs">Sept. 24</text>
<text x="1224.3" y="1013.0" font-size="12.50" font-weight="400" fill="#1e1e1e" text-anchor="middle" textLength="27.8" lengthAdjust="spacingAndGlyphs">12:00</text>
<rect x="362.8" y="1035.6" width="7.8" height="7.6" rx="1.5" fill="#a7d4ea"/>
<text x="375.3" y="1043.0" font-size="12.79" font-weight="400" fill="#1e1e1e" text-anchor="start" textLength="309.0" lengthAdjust="spacingAndGlyphs">Klostergasse Richtung Stadtstraße (Anzahl Gegenrichtung)</text>
<path d="M705 1039.4h7.6" stroke="#6a6fd8" stroke-width="1.3"/><circle cx="708.8" cy="1039.4" r="1.7" fill="#6a6fd8"/>
<text x="717.3" y="1043.0" font-size="12.79" font-weight="400" fill="#1e1e1e" text-anchor="start" textLength="264.5" lengthAdjust="spacingAndGlyphs">Klostergasse Richtung Stadtstraße (Durchfahrzeit)</text>

</svg>
</body></html>
